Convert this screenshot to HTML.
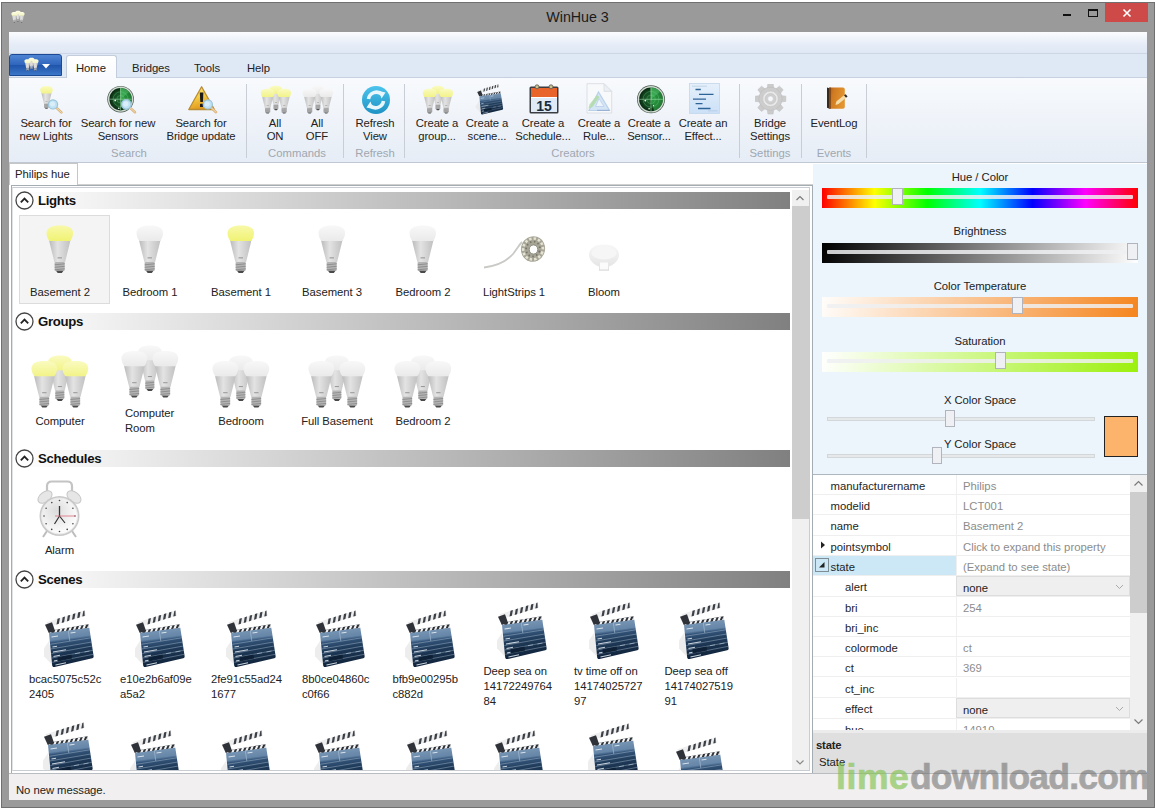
<!DOCTYPE html><html><head><meta charset="utf-8"><title>WinHue 3</title><style>
*{box-sizing:border-box;margin:0;padding:0}
html,body{width:1155px;height:808px;overflow:hidden;background:#fff}
body{font-family:"Liberation Sans",sans-serif;font-size:12px;color:#1e1e1e;position:relative}
.a{position:absolute}
.t{position:absolute;white-space:nowrap;font-size:11.300px;line-height:14px;letter-spacing:-0.050px;color:#222}
.c{text-align:center}
.rb{position:absolute;text-align:center;line-height:13px;font-size:11.300px;letter-spacing:-0.100px;color:#222;white-space:nowrap;width:100px}
.gl{position:absolute;top:146px;font-size:11.300px;line-height:14px;color:#a0a7b0;text-align:center;letter-spacing:0px;white-space:nowrap;transform:translateX(-50%)}
.sep{position:absolute;top:84px;width:1px;height:74px;background:#c9ced6}
.hdr{position:absolute;left:14px;width:776px;height:17px;background:linear-gradient(90deg,#ffffff 0%,#808080 100%)}
.hdr span{position:absolute;left:24px;top:-1px;font-weight:bold;font-size:13.200px;line-height:20px;color:#111;letter-spacing:-0.300px}
.hdr svg{position:absolute;left:1px;top:-1px}
.bar{position:absolute;left:822px;width:316px;height:20px}
.track{position:absolute;left:5px;right:5px;top:7px;height:4px;background:rgba(238,240,242,0.850);border-radius:1px}
.thumb{position:absolute;width:11px;height:17px;background:#eef0f4;border:1px solid #b2b4bd}
.pr{position:absolute;left:813px;width:317px;border-bottom:1px solid #efefef;font-size:11.300px;letter-spacing:0px;white-space:nowrap}
.pr .k{position:absolute;left:0;top:0;width:143px;height:100%;color:#1e1e1e}
.pr .k span{position:absolute;left:17.500px;top:4px;line-height:14px}
.pr.sub .k span{left:32px}
.pr .v{position:absolute;left:143px;top:0;width:174px;height:100%;color:#8c8c8c;border-left:1px solid #efefef}
.pr .v span{position:absolute;left:6px;top:4px;line-height:14px}
.pr .cb{background:#efefef;border:1px solid #dddddd;color:#1e1e1e}
</style></head><body>
<div class="a" style="left:1px;top:2px;width:1154px;height:806px;background:#9a9a9a;border:1px solid #707070"></div>
<div class="t" style="left:0px;top:9px;width:1155px;text-align:center;font-size:14.300px;line-height:17px;color:#1a1a1a;letter-spacing:-0.050px">WinHue 3</div>
<div class="a" style="left:11px;top:10px"><svg width="14" height="14" viewBox="-1 -3 60 60" style=""><g transform="translate(16.5,0) scale(0.9,0.96)">
<defs><linearGradient id="g1a" x1="0" x2="1" y1="0" y2="0"><stop offset="0" stop-color="#bababa"/><stop offset="0.400" stop-color="#e3e3e3"/><stop offset="1" stop-color="#c0c0c0"/></linearGradient>
<linearGradient id="g1b" x1="0" x2="0" y1="0" y2="1"><stop offset="0" stop-color="#fdfde6"/><stop offset="1" stop-color="#f3f4c0"/></linearGradient></defs>
<path d="M3 15 C4.500 22 7 31 8.500 37.500 L19 37.500 C20.500 31 23 22 24.500 15 Z" fill="url(#g1a)"/>
<path d="M14 0.500 C5.500 0.500 0.500 3 0.500 8 C0.500 11.500 2 14.500 3.500 16 L24 16 C25.500 14.500 27 11.500 27 8 C27 3 22.500 0.500 14 0.500 Z" fill="url(#g1b)"/>
<rect x="8.700" y="37" width="10" height="9" rx="1.200" fill="#b4b4b4"/>
<path d="M8.700 39.800 L18.700 38.800 M8.700 42.300 L18.700 41.300 M8.700 44.800 L18.700 43.800" stroke="#8a8a8a" stroke-width="0.900"/>
<path d="M10 45.800 L17.500 45.800 L15.800 48 L11.700 48 Z" fill="#4a4a4a"/>
<rect x="11.500" y="32.300" width="4.500" height="1.100" fill="#9a9a9a"/>
</g><g transform="translate(0,5.5) scale(0.97,0.98)">
<defs><linearGradient id="g2a" x1="0" x2="1" y1="0" y2="0"><stop offset="0" stop-color="#bababa"/><stop offset="0.400" stop-color="#e3e3e3"/><stop offset="1" stop-color="#c0c0c0"/></linearGradient>
<linearGradient id="g2b" x1="0" x2="0" y1="0" y2="1"><stop offset="0" stop-color="#fdfde6"/><stop offset="1" stop-color="#f3f4c0"/></linearGradient></defs>
<path d="M3 15 C4.500 22 7 31 8.500 37.500 L19 37.500 C20.500 31 23 22 24.500 15 Z" fill="url(#g2a)"/>
<path d="M14 0.500 C5.500 0.500 0.500 3 0.500 8 C0.500 11.500 2 14.500 3.500 16 L24 16 C25.500 14.500 27 11.500 27 8 C27 3 22.500 0.500 14 0.500 Z" fill="url(#g2b)"/>
<rect x="8.700" y="37" width="10" height="9" rx="1.200" fill="#b4b4b4"/>
<path d="M8.700 39.800 L18.700 38.800 M8.700 42.300 L18.700 41.300 M8.700 44.800 L18.700 43.800" stroke="#8a8a8a" stroke-width="0.900"/>
<path d="M10 45.800 L17.500 45.800 L15.800 48 L11.700 48 Z" fill="#4a4a4a"/>
<rect x="11.500" y="32.300" width="4.500" height="1.100" fill="#9a9a9a"/>
</g><g transform="translate(31,5.5) scale(0.97,0.98)">
<defs><linearGradient id="g3a" x1="0" x2="1" y1="0" y2="0"><stop offset="0" stop-color="#bababa"/><stop offset="0.400" stop-color="#e3e3e3"/><stop offset="1" stop-color="#c0c0c0"/></linearGradient>
<linearGradient id="g3b" x1="0" x2="0" y1="0" y2="1"><stop offset="0" stop-color="#fdfde6"/><stop offset="1" stop-color="#f3f4c0"/></linearGradient></defs>
<path d="M3 15 C4.500 22 7 31 8.500 37.500 L19 37.500 C20.500 31 23 22 24.500 15 Z" fill="url(#g3a)"/>
<path d="M14 0.500 C5.500 0.500 0.500 3 0.500 8 C0.500 11.500 2 14.500 3.500 16 L24 16 C25.500 14.500 27 11.500 27 8 C27 3 22.500 0.500 14 0.500 Z" fill="url(#g3b)"/>
<rect x="8.700" y="37" width="10" height="9" rx="1.200" fill="#b4b4b4"/>
<path d="M8.700 39.800 L18.700 38.800 M8.700 42.300 L18.700 41.300 M8.700 44.800 L18.700 43.800" stroke="#8a8a8a" stroke-width="0.900"/>
<path d="M10 45.800 L17.500 45.800 L15.800 48 L11.700 48 Z" fill="#4a4a4a"/>
<rect x="11.500" y="32.300" width="4.500" height="1.100" fill="#9a9a9a"/>
</g></svg></div>
<div class="a" style="left:1063px;top:14px;width:8px;height:2px;background:#111"></div>
<div class="a" style="left:1088px;top:9px;width:10px;height:8px;border:1px solid #111;border-top-width:2px"></div>
<div class="a" style="left:1105px;top:3px;width:43px;height:19px;background:#cd4a49"><svg width="43" height="19" style="position:absolute;left:0;top:0"><path d="M18.500 6.500 L25.500 13.500 M25.500 6.500 L18.500 13.500" stroke="#fff" stroke-width="1.600" fill="none"/></svg></div>
<div class="a" style="left:9px;top:32px;width:1138px;height:768px;background:#fff"></div>
<div class="a" style="left:9px;top:32px;width:1138px;height:22px;background:linear-gradient(#fbfcfe,#e6edf7 55%,#dee7f4)"></div>
<div class="a" style="left:9px;top:53px;width:1138px;height:25px;background:#dfe8f5;border-top:1px solid #ccd6e4;border-bottom:1px solid #c6d0de"></div>
<div class="a" style="left:9px;top:54px;width:53px;height:22px;border-radius:3px 3px 0 0;border:1px solid #1c4994;background:linear-gradient(#4f84d4 0%,#2f66bc 48%,#1f55aa 52%,#3b76c8 100%)"><svg width="15" height="15" viewBox="-1 -3 60 60" style="position:absolute;left:14px;top:2px"><g transform="translate(16.5,0) scale(0.9,0.96)">
<defs><linearGradient id="g4a" x1="0" x2="1" y1="0" y2="0"><stop offset="0" stop-color="#bababa"/><stop offset="0.400" stop-color="#e3e3e3"/><stop offset="1" stop-color="#c0c0c0"/></linearGradient>
<linearGradient id="g4b" x1="0" x2="0" y1="0" y2="1"><stop offset="0" stop-color="#fdfde6"/><stop offset="1" stop-color="#f3f4c0"/></linearGradient></defs>
<path d="M3 15 C4.500 22 7 31 8.500 37.500 L19 37.500 C20.500 31 23 22 24.500 15 Z" fill="url(#g4a)"/>
<path d="M14 0.500 C5.500 0.500 0.500 3 0.500 8 C0.500 11.500 2 14.500 3.500 16 L24 16 C25.500 14.500 27 11.500 27 8 C27 3 22.500 0.500 14 0.500 Z" fill="url(#g4b)"/>
<rect x="8.700" y="37" width="10" height="9" rx="1.200" fill="#b4b4b4"/>
<path d="M8.700 39.800 L18.700 38.800 M8.700 42.300 L18.700 41.300 M8.700 44.800 L18.700 43.800" stroke="#8a8a8a" stroke-width="0.900"/>
<path d="M10 45.800 L17.500 45.800 L15.800 48 L11.700 48 Z" fill="#4a4a4a"/>
<rect x="11.500" y="32.300" width="4.500" height="1.100" fill="#9a9a9a"/>
</g><g transform="translate(0,5.5) scale(0.97,0.98)">
<defs><linearGradient id="g5a" x1="0" x2="1" y1="0" y2="0"><stop offset="0" stop-color="#bababa"/><stop offset="0.400" stop-color="#e3e3e3"/><stop offset="1" stop-color="#c0c0c0"/></linearGradient>
<linearGradient id="g5b" x1="0" x2="0" y1="0" y2="1"><stop offset="0" stop-color="#fdfde6"/><stop offset="1" stop-color="#f3f4c0"/></linearGradient></defs>
<path d="M3 15 C4.500 22 7 31 8.500 37.500 L19 37.500 C20.500 31 23 22 24.500 15 Z" fill="url(#g5a)"/>
<path d="M14 0.500 C5.500 0.500 0.500 3 0.500 8 C0.500 11.500 2 14.500 3.500 16 L24 16 C25.500 14.500 27 11.500 27 8 C27 3 22.500 0.500 14 0.500 Z" fill="url(#g5b)"/>
<rect x="8.700" y="37" width="10" height="9" rx="1.200" fill="#b4b4b4"/>
<path d="M8.700 39.800 L18.700 38.800 M8.700 42.300 L18.700 41.300 M8.700 44.800 L18.700 43.800" stroke="#8a8a8a" stroke-width="0.900"/>
<path d="M10 45.800 L17.500 45.800 L15.800 48 L11.700 48 Z" fill="#4a4a4a"/>
<rect x="11.500" y="32.300" width="4.500" height="1.100" fill="#9a9a9a"/>
</g><g transform="translate(31,5.5) scale(0.97,0.98)">
<defs><linearGradient id="g6a" x1="0" x2="1" y1="0" y2="0"><stop offset="0" stop-color="#bababa"/><stop offset="0.400" stop-color="#e3e3e3"/><stop offset="1" stop-color="#c0c0c0"/></linearGradient>
<linearGradient id="g6b" x1="0" x2="0" y1="0" y2="1"><stop offset="0" stop-color="#fdfde6"/><stop offset="1" stop-color="#f3f4c0"/></linearGradient></defs>
<path d="M3 15 C4.500 22 7 31 8.500 37.500 L19 37.500 C20.500 31 23 22 24.500 15 Z" fill="url(#g6a)"/>
<path d="M14 0.500 C5.500 0.500 0.500 3 0.500 8 C0.500 11.500 2 14.500 3.500 16 L24 16 C25.500 14.500 27 11.500 27 8 C27 3 22.500 0.500 14 0.500 Z" fill="url(#g6b)"/>
<rect x="8.700" y="37" width="10" height="9" rx="1.200" fill="#b4b4b4"/>
<path d="M8.700 39.800 L18.700 38.800 M8.700 42.300 L18.700 41.300 M8.700 44.800 L18.700 43.800" stroke="#8a8a8a" stroke-width="0.900"/>
<path d="M10 45.800 L17.500 45.800 L15.800 48 L11.700 48 Z" fill="#4a4a4a"/>
<rect x="11.500" y="32.300" width="4.500" height="1.100" fill="#9a9a9a"/>
</g></svg><svg width="8" height="5" style="position:absolute;left:32px;top:9px"><path d="M0 0 L8 0 L4 4.500 Z" fill="#fff"/></svg></div>
<div class="a" style="left:66px;top:55px;width:51px;height:23px;background:linear-gradient(#ffffff,#f8fafd);border:1px solid #c3cddb;border-bottom:none;border-radius:3px 3px 0 0"></div>
<div class="t" style="left:76px;top:61px;">Home</div>
<div class="t" style="left:132px;top:61px;">Bridges</div>
<div class="t" style="left:194px;top:61px;">Tools</div>
<div class="t" style="left:247px;top:61px;">Help</div>
<div class="a" style="left:9px;top:78px;width:1138px;height:85px;background:linear-gradient(#f8fafd,#eff3f9 50%,#e6edf6);border-bottom:1px solid #c0c8d2"></div>
<div class="a" style="left:35px;top:84px"><svg width="32" height="32" viewBox="0 0 32 32" style="display:block;margin:0 auto 2px auto"><g transform="translate(5,1.7) scale(0.47,0.48)">
<defs><linearGradient id="g7a" x1="0" x2="1" y1="0" y2="0"><stop offset="0" stop-color="#bababa"/><stop offset="0.400" stop-color="#e3e3e3"/><stop offset="1" stop-color="#c0c0c0"/></linearGradient>
<linearGradient id="g7b" x1="0" x2="0" y1="0" y2="1"><stop offset="0" stop-color="#fafbc0"/><stop offset="1" stop-color="#f2f388"/></linearGradient></defs>
<path d="M3 15 C4.500 22 7 31 8.500 37.500 L19 37.500 C20.500 31 23 22 24.500 15 Z" fill="url(#g7a)"/>
<path d="M14 0.500 C5.500 0.500 0.500 3 0.500 8 C0.500 11.500 2 14.500 3.500 16 L24 16 C25.500 14.500 27 11.500 27 8 C27 3 22.500 0.500 14 0.500 Z" fill="url(#g7b)"/>
<rect x="8.700" y="37" width="10" height="9" rx="1.200" fill="#b4b4b4"/>
<path d="M8.700 39.800 L18.700 38.800 M8.700 42.300 L18.700 41.300 M8.700 44.800 L18.700 43.800" stroke="#8a8a8a" stroke-width="0.900"/>
<path d="M10 45.800 L17.500 45.800 L15.800 48 L11.700 48 Z" fill="#4a4a4a"/>
<rect x="11.500" y="32.300" width="4.500" height="1.100" fill="#9a9a9a"/>
</g><path d="M21.3 23.6 L26.4 28.4" stroke="#dcb47c" stroke-width="2.600" stroke-linecap="round"/><path d="M21.3 23.6 L26.4 28.4" stroke="#f0dcb8" stroke-width="1" stroke-linecap="round"/><circle cx="18" cy="20.4" r="4.6" fill="#bfe2f4" stroke="#9cc4d8" stroke-width="1.200"/><circle cx="17.5" cy="19.9" r="2.5" fill="#dcf0fa" opacity="0.900"/></svg></div>
<div class="rb" style="left:-4px;top:117px">Search for<br>new Lights</div>
<div class="a" style="left:107px;top:84px"><svg width="32" height="32" viewBox="0 0 32 32" style="display:block;margin:0 auto 2px auto"><defs><radialGradient id="g8" cx="0.500" cy="0.500" r="0.500"><stop offset="0" stop-color="#1f6a30"/><stop offset="0.700" stop-color="#12461f"/><stop offset="1" stop-color="#0a2611"/></radialGradient></defs>
<circle cx="13.6" cy="15.2" r="13.3" fill="#4a5a4e"/><circle cx="13.6" cy="15.2" r="12.6" fill="#d0dad2"/><circle cx="13.6" cy="15.2" r="11.2" fill="url(#g8)"/>
<path d="M13.6 15.2 L13.2 4.0 A11.2 11.2 0 0 1 16.5 26.0 Z" fill="#36c052" opacity="0.550"/>
<path d="M13.6 15.2 L13.2 4.0 A11.2 11.2 0 0 1 22.2 8.0 Z" fill="#7dff9a" opacity="0.250"/>
<circle cx="13.6" cy="15.2" r="7.4" fill="none" stroke="#6fdc88" stroke-width="0.500" opacity="0.600"/><circle cx="13.6" cy="15.2" r="3.8" fill="none" stroke="#6fdc88" stroke-width="0.500" opacity="0.600"/>
<path d="M13.6 4.0 L13.6 26.4 M2.4000000000000004 15.2 L24.799999999999997 15.2" stroke="#b8f5c4" stroke-width="0.700" opacity="0.700"/>
<circle cx="8.2" cy="16.4" r="0.900" fill="#e8ffe8"/><circle cx="16.0" cy="21.2" r="0.700" fill="#e8ffe8"/><circle cx="11.8" cy="24.2" r="0.800" fill="#e8ffe8"/><path d="M22.9 23.6 L28.0 28.2" stroke="#dcb47c" stroke-width="2.600" stroke-linecap="round"/><path d="M22.9 23.6 L28.0 28.2" stroke="#f0dcb8" stroke-width="1" stroke-linecap="round"/><circle cx="19.3" cy="20.4" r="4.8" fill="#bfe2f4" stroke="#9cc4d8" stroke-width="1.200"/><circle cx="18.8" cy="19.9" r="2.6" fill="#dcf0fa" opacity="0.900"/></svg></div>
<div class="rb" style="left:68px;top:117px">Search for new<br>Sensors</div>
<div class="a" style="left:188px;top:84px"><svg width="32" height="32" viewBox="0 0 32 32" style="display:block;margin:0 auto 2px auto"><defs><linearGradient id="g9" x1="0" x2="0.300" y1="0" y2="1"><stop offset="0" stop-color="#fbe680"/><stop offset="0.500" stop-color="#f6cf45"/><stop offset="1" stop-color="#e39a1c"/></linearGradient></defs>
<path d="M13.600 2.700 L0.800 25.500 L26.400 25.500 Z" fill="url(#g9)" stroke="#b98d34" stroke-width="1.300" stroke-linejoin="round"/>
<path d="M11.800 8.500 L15.400 8.500 L14.900 18 L12.300 18 Z" fill="#1c1c1c"/><rect x="12" y="19.800" width="3.200" height="3.200" rx="0.600" fill="#1c1c1c"/><path d="M23.1 23.6 L28.0 28.2" stroke="#dcb47c" stroke-width="2.600" stroke-linecap="round"/><path d="M23.1 23.6 L28.0 28.2" stroke="#f0dcb8" stroke-width="1" stroke-linecap="round"/><circle cx="19.8" cy="20.4" r="4.6" fill="#bfe2f4" stroke="#9cc4d8" stroke-width="1.200"/><circle cx="19.3" cy="19.9" r="2.5" fill="#dcf0fa" opacity="0.900"/></svg></div>
<div class="rb" style="left:151px;top:117px">Search for<br>Bridge update</div>
<div class="a" style="left:260px;top:84px"><svg width="32" height="32" viewBox="-1 -3 60 60" style="display:block"><g transform="translate(16.5,0) scale(0.9,0.96)">
<defs><linearGradient id="g10a" x1="0" x2="1" y1="0" y2="0"><stop offset="0" stop-color="#bababa"/><stop offset="0.400" stop-color="#e3e3e3"/><stop offset="1" stop-color="#c0c0c0"/></linearGradient>
<linearGradient id="g10b" x1="0" x2="0" y1="0" y2="1"><stop offset="0" stop-color="#fafbc0"/><stop offset="1" stop-color="#f2f388"/></linearGradient></defs>
<path d="M3 15 C4.500 22 7 31 8.500 37.500 L19 37.500 C20.500 31 23 22 24.500 15 Z" fill="url(#g10a)"/>
<path d="M14 0.500 C5.500 0.500 0.500 3 0.500 8 C0.500 11.500 2 14.500 3.500 16 L24 16 C25.500 14.500 27 11.500 27 8 C27 3 22.500 0.500 14 0.500 Z" fill="url(#g10b)"/>
<rect x="8.700" y="37" width="10" height="9" rx="1.200" fill="#b4b4b4"/>
<path d="M8.700 39.800 L18.700 38.800 M8.700 42.300 L18.700 41.300 M8.700 44.800 L18.700 43.800" stroke="#8a8a8a" stroke-width="0.900"/>
<path d="M10 45.800 L17.500 45.800 L15.800 48 L11.700 48 Z" fill="#4a4a4a"/>
<rect x="11.500" y="32.300" width="4.500" height="1.100" fill="#9a9a9a"/>
</g><g transform="translate(0,5.5) scale(0.97,0.98)">
<defs><linearGradient id="g11a" x1="0" x2="1" y1="0" y2="0"><stop offset="0" stop-color="#bababa"/><stop offset="0.400" stop-color="#e3e3e3"/><stop offset="1" stop-color="#c0c0c0"/></linearGradient>
<linearGradient id="g11b" x1="0" x2="0" y1="0" y2="1"><stop offset="0" stop-color="#fafbc0"/><stop offset="1" stop-color="#f2f388"/></linearGradient></defs>
<path d="M3 15 C4.500 22 7 31 8.500 37.500 L19 37.500 C20.500 31 23 22 24.500 15 Z" fill="url(#g11a)"/>
<path d="M14 0.500 C5.500 0.500 0.500 3 0.500 8 C0.500 11.500 2 14.500 3.500 16 L24 16 C25.500 14.500 27 11.500 27 8 C27 3 22.500 0.500 14 0.500 Z" fill="url(#g11b)"/>
<rect x="8.700" y="37" width="10" height="9" rx="1.200" fill="#b4b4b4"/>
<path d="M8.700 39.800 L18.700 38.800 M8.700 42.300 L18.700 41.300 M8.700 44.800 L18.700 43.800" stroke="#8a8a8a" stroke-width="0.900"/>
<path d="M10 45.800 L17.500 45.800 L15.800 48 L11.700 48 Z" fill="#4a4a4a"/>
<rect x="11.500" y="32.300" width="4.500" height="1.100" fill="#9a9a9a"/>
</g><g transform="translate(31,5.5) scale(0.97,0.98)">
<defs><linearGradient id="g12a" x1="0" x2="1" y1="0" y2="0"><stop offset="0" stop-color="#bababa"/><stop offset="0.400" stop-color="#e3e3e3"/><stop offset="1" stop-color="#c0c0c0"/></linearGradient>
<linearGradient id="g12b" x1="0" x2="0" y1="0" y2="1"><stop offset="0" stop-color="#fafbc0"/><stop offset="1" stop-color="#f2f388"/></linearGradient></defs>
<path d="M3 15 C4.500 22 7 31 8.500 37.500 L19 37.500 C20.500 31 23 22 24.500 15 Z" fill="url(#g12a)"/>
<path d="M14 0.500 C5.500 0.500 0.500 3 0.500 8 C0.500 11.500 2 14.500 3.500 16 L24 16 C25.500 14.500 27 11.500 27 8 C27 3 22.500 0.500 14 0.500 Z" fill="url(#g12b)"/>
<rect x="8.700" y="37" width="10" height="9" rx="1.200" fill="#b4b4b4"/>
<path d="M8.700 39.800 L18.700 38.800 M8.700 42.300 L18.700 41.300 M8.700 44.800 L18.700 43.800" stroke="#8a8a8a" stroke-width="0.900"/>
<path d="M10 45.800 L17.500 45.800 L15.800 48 L11.700 48 Z" fill="#4a4a4a"/>
<rect x="11.500" y="32.300" width="4.500" height="1.100" fill="#9a9a9a"/>
</g></svg></div>
<div class="rb" style="left:225px;top:117px">All<br>ON</div>
<div class="a" style="left:302px;top:84px"><svg width="32" height="32" viewBox="-1 -3 60 60" style="display:block"><g transform="translate(16.5,0) scale(0.9,0.96)">
<defs><linearGradient id="g13a" x1="0" x2="1" y1="0" y2="0"><stop offset="0" stop-color="#bababa"/><stop offset="0.400" stop-color="#e3e3e3"/><stop offset="1" stop-color="#c0c0c0"/></linearGradient>
<linearGradient id="g13b" x1="0" x2="0" y1="0" y2="1"><stop offset="0" stop-color="#f8f8f8"/><stop offset="1" stop-color="#eaeaea"/></linearGradient></defs>
<path d="M3 15 C4.500 22 7 31 8.500 37.500 L19 37.500 C20.500 31 23 22 24.500 15 Z" fill="url(#g13a)"/>
<path d="M14 0.500 C5.500 0.500 0.500 3 0.500 8 C0.500 11.500 2 14.500 3.500 16 L24 16 C25.500 14.500 27 11.500 27 8 C27 3 22.500 0.500 14 0.500 Z" fill="url(#g13b)"/>
<rect x="8.700" y="37" width="10" height="9" rx="1.200" fill="#b4b4b4"/>
<path d="M8.700 39.800 L18.700 38.800 M8.700 42.300 L18.700 41.300 M8.700 44.800 L18.700 43.800" stroke="#8a8a8a" stroke-width="0.900"/>
<path d="M10 45.800 L17.500 45.800 L15.800 48 L11.700 48 Z" fill="#4a4a4a"/>
<rect x="11.500" y="32.300" width="4.500" height="1.100" fill="#9a9a9a"/>
</g><g transform="translate(0,5.5) scale(0.97,0.98)">
<defs><linearGradient id="g14a" x1="0" x2="1" y1="0" y2="0"><stop offset="0" stop-color="#bababa"/><stop offset="0.400" stop-color="#e3e3e3"/><stop offset="1" stop-color="#c0c0c0"/></linearGradient>
<linearGradient id="g14b" x1="0" x2="0" y1="0" y2="1"><stop offset="0" stop-color="#f8f8f8"/><stop offset="1" stop-color="#eaeaea"/></linearGradient></defs>
<path d="M3 15 C4.500 22 7 31 8.500 37.500 L19 37.500 C20.500 31 23 22 24.500 15 Z" fill="url(#g14a)"/>
<path d="M14 0.500 C5.500 0.500 0.500 3 0.500 8 C0.500 11.500 2 14.500 3.500 16 L24 16 C25.500 14.500 27 11.500 27 8 C27 3 22.500 0.500 14 0.500 Z" fill="url(#g14b)"/>
<rect x="8.700" y="37" width="10" height="9" rx="1.200" fill="#b4b4b4"/>
<path d="M8.700 39.800 L18.700 38.800 M8.700 42.300 L18.700 41.300 M8.700 44.800 L18.700 43.800" stroke="#8a8a8a" stroke-width="0.900"/>
<path d="M10 45.800 L17.500 45.800 L15.800 48 L11.700 48 Z" fill="#4a4a4a"/>
<rect x="11.500" y="32.300" width="4.500" height="1.100" fill="#9a9a9a"/>
</g><g transform="translate(31,5.5) scale(0.97,0.98)">
<defs><linearGradient id="g15a" x1="0" x2="1" y1="0" y2="0"><stop offset="0" stop-color="#bababa"/><stop offset="0.400" stop-color="#e3e3e3"/><stop offset="1" stop-color="#c0c0c0"/></linearGradient>
<linearGradient id="g15b" x1="0" x2="0" y1="0" y2="1"><stop offset="0" stop-color="#f8f8f8"/><stop offset="1" stop-color="#eaeaea"/></linearGradient></defs>
<path d="M3 15 C4.500 22 7 31 8.500 37.500 L19 37.500 C20.500 31 23 22 24.500 15 Z" fill="url(#g15a)"/>
<path d="M14 0.500 C5.500 0.500 0.500 3 0.500 8 C0.500 11.500 2 14.500 3.500 16 L24 16 C25.500 14.500 27 11.500 27 8 C27 3 22.500 0.500 14 0.500 Z" fill="url(#g15b)"/>
<rect x="8.700" y="37" width="10" height="9" rx="1.200" fill="#b4b4b4"/>
<path d="M8.700 39.800 L18.700 38.800 M8.700 42.300 L18.700 41.300 M8.700 44.800 L18.700 43.800" stroke="#8a8a8a" stroke-width="0.900"/>
<path d="M10 45.800 L17.500 45.800 L15.800 48 L11.700 48 Z" fill="#4a4a4a"/>
<rect x="11.500" y="32.300" width="4.500" height="1.100" fill="#9a9a9a"/>
</g></svg></div>
<div class="rb" style="left:267px;top:117px">All<br>OFF</div>
<div class="a" style="left:360px;top:84px"><svg width="32" height="32" viewBox="0 0 32 32" style="display:block;margin:0 auto 2px auto"><defs><linearGradient id="g16" x1="0" x2="0" y1="0" y2="1"><stop offset="0" stop-color="#4cc4ec"/><stop offset="1" stop-color="#1f92c4"/></linearGradient></defs>
<circle cx="16" cy="16" r="14" fill="url(#g16)"/>
<path d="M8.500 15 A8 8 0 0 1 22 10.500" fill="none" stroke="#e9f7fd" stroke-width="3.600"/><path d="M19 7 L25.500 8.500 L21.500 14.500 Z" fill="#e9f7fd"/>
<path d="M23.500 17 A8 8 0 0 1 10 21.500" fill="none" stroke="#e9f7fd" stroke-width="3.600"/><path d="M13 25 L6.500 23.500 L10.500 17.500 Z" fill="#e9f7fd"/></svg></div>
<div class="rb" style="left:325px;top:117px">Refresh<br>View</div>
<div class="a" style="left:422px;top:84px"><svg width="32" height="32" viewBox="-1 -3 60 60" style="display:block"><g transform="translate(16.5,0) scale(0.9,0.96)">
<defs><linearGradient id="g17a" x1="0" x2="1" y1="0" y2="0"><stop offset="0" stop-color="#bababa"/><stop offset="0.400" stop-color="#e3e3e3"/><stop offset="1" stop-color="#c0c0c0"/></linearGradient>
<linearGradient id="g17b" x1="0" x2="0" y1="0" y2="1"><stop offset="0" stop-color="#fafbc0"/><stop offset="1" stop-color="#f2f388"/></linearGradient></defs>
<path d="M3 15 C4.500 22 7 31 8.500 37.500 L19 37.500 C20.500 31 23 22 24.500 15 Z" fill="url(#g17a)"/>
<path d="M14 0.500 C5.500 0.500 0.500 3 0.500 8 C0.500 11.500 2 14.500 3.500 16 L24 16 C25.500 14.500 27 11.500 27 8 C27 3 22.500 0.500 14 0.500 Z" fill="url(#g17b)"/>
<rect x="8.700" y="37" width="10" height="9" rx="1.200" fill="#b4b4b4"/>
<path d="M8.700 39.800 L18.700 38.800 M8.700 42.300 L18.700 41.300 M8.700 44.800 L18.700 43.800" stroke="#8a8a8a" stroke-width="0.900"/>
<path d="M10 45.800 L17.500 45.800 L15.800 48 L11.700 48 Z" fill="#4a4a4a"/>
<rect x="11.500" y="32.300" width="4.500" height="1.100" fill="#9a9a9a"/>
</g><g transform="translate(0,5.5) scale(0.97,0.98)">
<defs><linearGradient id="g18a" x1="0" x2="1" y1="0" y2="0"><stop offset="0" stop-color="#bababa"/><stop offset="0.400" stop-color="#e3e3e3"/><stop offset="1" stop-color="#c0c0c0"/></linearGradient>
<linearGradient id="g18b" x1="0" x2="0" y1="0" y2="1"><stop offset="0" stop-color="#fafbc0"/><stop offset="1" stop-color="#f2f388"/></linearGradient></defs>
<path d="M3 15 C4.500 22 7 31 8.500 37.500 L19 37.500 C20.500 31 23 22 24.500 15 Z" fill="url(#g18a)"/>
<path d="M14 0.500 C5.500 0.500 0.500 3 0.500 8 C0.500 11.500 2 14.500 3.500 16 L24 16 C25.500 14.500 27 11.500 27 8 C27 3 22.500 0.500 14 0.500 Z" fill="url(#g18b)"/>
<rect x="8.700" y="37" width="10" height="9" rx="1.200" fill="#b4b4b4"/>
<path d="M8.700 39.800 L18.700 38.800 M8.700 42.300 L18.700 41.300 M8.700 44.800 L18.700 43.800" stroke="#8a8a8a" stroke-width="0.900"/>
<path d="M10 45.800 L17.500 45.800 L15.800 48 L11.700 48 Z" fill="#4a4a4a"/>
<rect x="11.500" y="32.300" width="4.500" height="1.100" fill="#9a9a9a"/>
</g><g transform="translate(31,5.5) scale(0.97,0.98)">
<defs><linearGradient id="g19a" x1="0" x2="1" y1="0" y2="0"><stop offset="0" stop-color="#bababa"/><stop offset="0.400" stop-color="#e3e3e3"/><stop offset="1" stop-color="#c0c0c0"/></linearGradient>
<linearGradient id="g19b" x1="0" x2="0" y1="0" y2="1"><stop offset="0" stop-color="#fafbc0"/><stop offset="1" stop-color="#f2f388"/></linearGradient></defs>
<path d="M3 15 C4.500 22 7 31 8.500 37.500 L19 37.500 C20.500 31 23 22 24.500 15 Z" fill="url(#g19a)"/>
<path d="M14 0.500 C5.500 0.500 0.500 3 0.500 8 C0.500 11.500 2 14.500 3.500 16 L24 16 C25.500 14.500 27 11.500 27 8 C27 3 22.500 0.500 14 0.500 Z" fill="url(#g19b)"/>
<rect x="8.700" y="37" width="10" height="9" rx="1.200" fill="#b4b4b4"/>
<path d="M8.700 39.800 L18.700 38.800 M8.700 42.300 L18.700 41.300 M8.700 44.800 L18.700 43.800" stroke="#8a8a8a" stroke-width="0.900"/>
<path d="M10 45.800 L17.500 45.800 L15.800 48 L11.700 48 Z" fill="#4a4a4a"/>
<rect x="11.500" y="32.300" width="4.500" height="1.100" fill="#9a9a9a"/>
</g></svg></div>
<div class="rb" style="left:387px;top:117px">Create a<br>group...</div>
<div class="a" style="left:474px;top:84px"><svg width="32" height="32" viewBox="-5 0 60 60" style="display:block;margin:0 auto 2px auto"><defs><linearGradient id="g20" x1="0" x2="0.150" y1="0" y2="1"><stop offset="0" stop-color="#819dba"/><stop offset="0.320" stop-color="#6686a8"/><stop offset="0.380" stop-color="#34557a"/><stop offset="0.580" stop-color="#1f3b5a"/><stop offset="1" stop-color="#10233a"/></linearGradient></defs>
<path d="M-3 43 L5 31 L9 56 Z" fill="#e6e6e6" opacity="0.700"/>
<path d="M2.4 12.2 L40.5 0.5 L42.0 5.5 L3.9 17.2 Z" fill="#eeeeee"/><path d="M13.5 8.8 L15.9 8.1 L14.9 13.8 L12.5 14.5 Z" fill="#3b3f46"/><path d="M18.7 7.2 L21.0 6.5 L20.1 12.2 L17.7 12.9 Z" fill="#3b3f46"/><path d="M23.8 5.6 L26.2 4.9 L25.2 10.6 L22.9 11.4 Z" fill="#3b3f46"/><path d="M29.0 4.0 L31.4 3.3 L30.4 9.0 L28.0 9.8 Z" fill="#3b3f46"/><path d="M34.1 2.5 L36.5 1.7 L35.6 7.5 L33.2 8.2 Z" fill="#3b3f46"/><path d="M39.3 0.9 L40.5 0.5 L40.7 5.9 L38.3 6.6 Z" fill="#3b3f46"/>
<path d="M7.0 20.4 L44.5 14.2 L45.1 17.9 L7.6 24.1 Z" fill="#2c3037"/><path d="M11.4 19.7 L13.8 19.3 L12.2 23.4 L9.8 23.8 Z" fill="#f4f4f4"/><path d="M16.2 18.9 L18.5 18.5 L16.9 22.6 L14.5 23.0 Z" fill="#f4f4f4"/><path d="M20.9 18.1 L23.3 17.7 L21.6 21.8 L19.3 22.2 Z" fill="#f4f4f4"/><path d="M25.6 17.3 L28.0 16.9 L26.4 21.0 L24.0 21.4 Z" fill="#f4f4f4"/><path d="M30.4 16.5 L32.7 16.1 L31.1 20.3 L28.7 20.7 Z" fill="#f4f4f4"/><path d="M35.1 15.8 L37.5 15.4 L35.8 19.5 L33.5 19.9 Z" fill="#f4f4f4"/><path d="M39.8 15.0 L42.2 14.6 L40.6 18.7 L38.2 19.1 Z" fill="#f4f4f4"/><path d="M44.6 14.2 L44.5 14.2 L45.1 17.9 L42.9 18.3 Z" fill="#f4f4f4"/>
<path d="M1 14.800 L8 12.300 L11 20.800 L4.800 23 Z" fill="#2f3238"/>
<path d="M5 23 L45.300 17.800 L49.600 46 C49.800 47.200 49.300 48 48.200 48.300 L10.500 57 C9.300 57.300 8.400 56.800 8.200 55.600 Z" fill="url(#g20)"/>
<path d="M6.300 34.300 L47 27.800 M6.800 39 L47.700 32 M7.300 43.500 L48.300 36 M7.800 48 L48.900 40.300 M8.300 52.300 L49.400 44.300" stroke="#b5c8da" stroke-width="0.600" opacity="0.700"/>
<path d="M24.300 20.800 L25.800 31" stroke="#b5c8da" stroke-width="0.700" opacity="0.800"/>
<path d="M7.500 27 L14 26 M26.500 23 L31.500 22.200 M8.500 37 L13 36.200 M9 42 L22 39.700 M9.500 46.500 L16 45.300 M10 51 L13.500 50.300 M11.500 55 L22 52.700" stroke="#e8eff6" stroke-width="1.100" opacity="0.850"/>
<path d="M13.500 47.300 L27.500 44.600 L28 48.600 L14 51.400 Z" fill="#0d1f33" opacity="0.900"/>
<path d="M31 43.700 L36 42.800 M40.500 42 L45.500 41" stroke="#c9d8e6" stroke-width="0.800" opacity="0.700"/></svg></div>
<div class="rb" style="left:437px;top:117px">Create a<br>scene...</div>
<div class="a" style="left:528px;top:84px"><svg width="32" height="32" viewBox="0 0 32 32" style="display:block;margin:0 auto 2px auto"><rect x="1.500" y="2.500" width="29" height="27" rx="1.500" fill="#3a3d42"/>
<rect x="3" y="4" width="26" height="9" fill="#e8642a"/><rect x="3" y="13" width="26" height="15" fill="#dfeaf6"/>
<rect x="3" y="13" width="26" height="1" fill="#fff"/>
<circle cx="9" cy="2.800" r="2" fill="#c9c08a" stroke="#555" stroke-width="0.800"/><circle cx="23" cy="2.800" r="2" fill="#c9c08a" stroke="#555" stroke-width="0.800"/>
<text x="16" y="26.500" text-anchor="middle" font-family="Liberation Sans, sans-serif" font-weight="bold" font-size="14" fill="#1b2a3a">15</text></svg></div>
<div class="rb" style="left:493px;top:117px">Create a<br>Schedule...</div>
<div class="a" style="left:584px;top:83px"><svg width="32" height="32" viewBox="0 0 32 32" style="display:block;margin:0 auto 2px auto"><path d="M3 0.700 L20 0.700 L27.700 8.400 L27.700 30 L3 30 Z" fill="#f7f9fb" stroke="#d9dde2" stroke-width="0.900"/>
<path d="M20 0.700 L20 8.400 L27.700 8.400 Z" fill="#eceff3" stroke="#d9dde2" stroke-width="0.800"/>
<path d="M14.500 9 L5 27.500 L25.500 27.500 Z" fill="#d3e4f6" stroke="#b7cfea" stroke-width="1.200" opacity="0.950"/>
<path d="M15 15.500 L11.500 23.500 L20 23.500 Z" fill="#eef4fb" stroke="#b7cfea" stroke-width="0.800"/>
<path d="M4.500 25.500 L5.500 21.500 L13 12 L15.500 14 L8.500 24 Z" fill="#b4dcae" opacity="0.900"/>
<path d="M13 27.300 L25.500 27.300" stroke="#8fa6cf" stroke-width="0.900"/></svg></div>
<div class="rb" style="left:549px;top:117px">Create a<br>Rule...</div>
<div class="a" style="left:635px;top:84px"><svg width="32" height="32" viewBox="0 0 32 32" style="display:block;margin:0 auto 2px auto"><defs><radialGradient id="g21" cx="0.500" cy="0.500" r="0.500"><stop offset="0" stop-color="#1f6a30"/><stop offset="0.700" stop-color="#12461f"/><stop offset="1" stop-color="#0a2611"/></radialGradient></defs>
<circle cx="16" cy="15.3" r="14.0" fill="#4a5a4e"/><circle cx="16" cy="15.3" r="13.299999999999999" fill="#d0dad2"/><circle cx="16" cy="15.3" r="11.899999999999999" fill="url(#g21)"/>
<path d="M16 15.3 L15.6 3.4 A11.899999999999999 11.899999999999999 0 0 1 19.1 26.8 Z" fill="#36c052" opacity="0.550"/>
<path d="M16 15.3 L15.6 3.4 A11.899999999999999 11.899999999999999 0 0 1 25.1 7.7 Z" fill="#7dff9a" opacity="0.250"/>
<circle cx="16" cy="15.3" r="7.9" fill="none" stroke="#6fdc88" stroke-width="0.500" opacity="0.600"/><circle cx="16" cy="15.3" r="4.1" fill="none" stroke="#6fdc88" stroke-width="0.500" opacity="0.600"/>
<path d="M16 3.400000000000002 L16 27.2 M4.100000000000001 15.3 L27.9 15.3" stroke="#b8f5c4" stroke-width="0.700" opacity="0.700"/>
<circle cx="10.3" cy="16.6" r="0.900" fill="#e8ffe8"/><circle cx="18.5" cy="21.6" r="0.700" fill="#e8ffe8"/><circle cx="14.1" cy="24.8" r="0.800" fill="#e8ffe8"/></svg></div>
<div class="rb" style="left:599px;top:117px">Create a<br>Sensor...</div>
<div class="a" style="left:689px;top:83px"><svg width="32" height="32" viewBox="0 0 32 32" style="display:block;margin:0 auto 2px auto"><defs><linearGradient id="g22" x1="0" x2="0" y1="0" y2="1"><stop offset="0" stop-color="#e6f0fb"/><stop offset="1" stop-color="#cbe0f7"/></linearGradient></defs>
<rect x="0.500" y="0.500" width="30" height="30" fill="url(#g22)" stroke="#c2d6ec" stroke-width="0.800"/>
<path d="M3 3.200 L18 3.200 M19 27.800 L28.500 27.800" stroke="#a9c2dc" stroke-width="0.600"/>
<path d="M6.500 6.500 L11.800 6.500 M10 11.400 L24.500 11.400 M4 16.100 L17 16.100 M6.600 20.600 L13.500 20.600 M9 25.500 L21.500 25.500" stroke="#2e6396" stroke-width="1.300"/></svg></div>
<div class="rb" style="left:653px;top:117px">Create an<br>Effect...</div>
<div class="a" style="left:755px;top:83.5px"><svg width="32" height="32" viewBox="0 0 32 32" style="display:block;margin:0 auto 2px auto"><path d="M12.2 4.800000000000001 L12.9 -0.5 L18.1 -0.5 L18.8 4.800000000000001 Z" fill="#cbcbcb" stroke="#bdbdbd" stroke-width="0.500" transform="rotate(0 15.5 14.8)"/><path d="M12.2 4.800000000000001 L12.9 -0.5 L18.1 -0.5 L18.8 4.800000000000001 Z" fill="#cbcbcb" stroke="#bdbdbd" stroke-width="0.500" transform="rotate(45 15.5 14.8)"/><path d="M12.2 4.800000000000001 L12.9 -0.5 L18.1 -0.5 L18.8 4.800000000000001 Z" fill="#cbcbcb" stroke="#bdbdbd" stroke-width="0.500" transform="rotate(90 15.5 14.8)"/><path d="M12.2 4.800000000000001 L12.9 -0.5 L18.1 -0.5 L18.8 4.800000000000001 Z" fill="#cbcbcb" stroke="#bdbdbd" stroke-width="0.500" transform="rotate(135 15.5 14.8)"/><path d="M12.2 4.800000000000001 L12.9 -0.5 L18.1 -0.5 L18.8 4.800000000000001 Z" fill="#cbcbcb" stroke="#bdbdbd" stroke-width="0.500" transform="rotate(180 15.5 14.8)"/><path d="M12.2 4.800000000000001 L12.9 -0.5 L18.1 -0.5 L18.8 4.800000000000001 Z" fill="#cbcbcb" stroke="#bdbdbd" stroke-width="0.500" transform="rotate(225 15.5 14.8)"/><path d="M12.2 4.800000000000001 L12.9 -0.5 L18.1 -0.5 L18.8 4.800000000000001 Z" fill="#cbcbcb" stroke="#bdbdbd" stroke-width="0.500" transform="rotate(270 15.5 14.8)"/><path d="M12.2 4.800000000000001 L12.9 -0.5 L18.1 -0.5 L18.8 4.800000000000001 Z" fill="#cbcbcb" stroke="#bdbdbd" stroke-width="0.500" transform="rotate(315 15.5 14.8)"/><circle cx="15.5" cy="14.8" r="11.600" fill="#cdcdcd" stroke="#bcbcbc" stroke-width="0.600"/><circle cx="15.5" cy="14.8" r="7.800" fill="#e9e9e9" stroke="#c2c2c2" stroke-width="0.600"/><circle cx="15.5" cy="14.8" r="5.400" fill="#cfcfcf" stroke="#bdbdbd" stroke-width="0.500"/><circle cx="15.5" cy="14.8" r="2.800" fill="#f6f8fb" stroke="#c6c6c6" stroke-width="0.500"/></svg></div>
<div class="rb" style="left:720px;top:117px">Bridge<br>Settings</div>
<div class="a" style="left:819px;top:84px"><svg width="32" height="32" viewBox="0 0 32 32" style="display:block;margin:0 auto 2px auto"><defs><linearGradient id="g23" x1="0" x2="1" y1="0" y2="0.300"><stop offset="0" stop-color="#a85a18"/><stop offset="0.300" stop-color="#cf7a22"/><stop offset="1" stop-color="#e3942f"/></linearGradient></defs>
<path d="M8 3.500 L8 23.800 L11.200 25 L11.200 4.600 Z" fill="#3b2a1e"/>
<path d="M10.200 3.500 L23.800 3.500 C25 3.500 25.800 4.300 25.800 5.500 L25.800 22.800 C25.800 24 25 24.800 23.800 24.800 L10.200 24.800 Z" fill="url(#g23)"/>
<path d="M10.200 3.500 L12 3.500 L12 24.800 L10.200 24.800 Z" fill="#6e3c14" opacity="0.700"/>
<path d="M16.500 21 L17.300 17.500 L25 11.300 L27 13.800 L19.500 20 Z" fill="#f6dca8"/><path d="M25 11.300 L27 13.800 L28.600 12.600 L26.700 10.200 Z" fill="#2c2c2c"/></svg></div>
<div class="rb" style="left:784px;top:117px">EventLog</div>
<div class="sep" style="left:246px"></div>
<div class="sep" style="left:343px"></div>
<div class="sep" style="left:404px"></div>
<div class="sep" style="left:739px"></div>
<div class="sep" style="left:801px"></div>
<div class="sep" style="left:866px"></div>
<div class="gl" style="left:129px">Search</div>
<div class="gl" style="left:297px">Commands</div>
<div class="gl" style="left:375px">Refresh</div>
<div class="gl" style="left:573px">Creators</div>
<div class="gl" style="left:770px">Settings</div>
<div class="gl" style="left:834px">Events</div>
<div class="a" style="left:813px;top:164px;width:334px;height:610px;background:#ecf4fc"></div>
<div class="a" style="left:9px;top:163px;width:69px;height:22px;border:1px solid #c6c6c6;border-bottom:none;background:#fff"></div>
<div class="t" style="left:15px;top:167px;">Philips hue</div>
<div class="a" style="left:78px;top:184px;width:735px;height:1px;background:#d0d0d0"></div>
<div class="a" style="left:11px;top:185px;width:802px;height:589px;border:1px solid #a4acb4;background:#fff"></div>
<div class="a" style="left:12px;top:187px;width:798px;height:584px;border:1px solid #c9cdd2;border-left-color:#e0e3e6;background:#fff"></div>
<div class="a" style="left:0;top:0;width:1155px;height:770px;overflow:hidden">
<div class="hdr" style="top:192px"><svg width="19" height="19" viewBox="0 0 19 19"><circle cx="9.500" cy="9.500" r="8.500" fill="#fff" stroke="#444" stroke-width="1.300"/><path d="M5.800 11.300 L9.500 7.600 L13.200 11.300" fill="none" stroke="#222" stroke-width="1.800"/></svg><span>Lights</span></div>
<div class="hdr" style="top:313px"><svg width="19" height="19" viewBox="0 0 19 19"><circle cx="9.500" cy="9.500" r="8.500" fill="#fff" stroke="#444" stroke-width="1.300"/><path d="M5.800 11.300 L9.500 7.600 L13.200 11.300" fill="none" stroke="#222" stroke-width="1.800"/></svg><span>Groups</span></div>
<div class="hdr" style="top:450px"><svg width="19" height="19" viewBox="0 0 19 19"><circle cx="9.500" cy="9.500" r="8.500" fill="#fff" stroke="#444" stroke-width="1.300"/><path d="M5.800 11.300 L9.500 7.600 L13.200 11.300" fill="none" stroke="#222" stroke-width="1.800"/></svg><span>Schedules</span></div>
<div class="hdr" style="top:571px"><svg width="19" height="19" viewBox="0 0 19 19"><circle cx="9.500" cy="9.500" r="8.500" fill="#fff" stroke="#444" stroke-width="1.300"/><path d="M5.800 11.300 L9.500 7.600 L13.200 11.300" fill="none" stroke="#222" stroke-width="1.800"/></svg><span>Scenes</span></div>
<div class="a" style="left:19px;top:215px;width:91px;height:89px;background:#f4f4f4;border:1px solid #dcdcdc"></div>
<div class="a" style="left:46px;top:225px"><svg width="28" height="48" viewBox="0 0 28 48" style="display:block"><g transform="translate(0,0) scale(1.0,1.0)">
<defs><linearGradient id="g24a" x1="0" x2="1" y1="0" y2="0"><stop offset="0" stop-color="#bababa"/><stop offset="0.400" stop-color="#e3e3e3"/><stop offset="1" stop-color="#c0c0c0"/></linearGradient>
<linearGradient id="g24b" x1="0" x2="0" y1="0" y2="1"><stop offset="0" stop-color="#f8f9a8"/><stop offset="1" stop-color="#f0f274"/></linearGradient></defs>
<path d="M3 15 C4.500 22 7 31 8.500 37.500 L19 37.500 C20.500 31 23 22 24.500 15 Z" fill="url(#g24a)"/>
<path d="M14 0.500 C5.500 0.500 0.500 3 0.500 8 C0.500 11.500 2 14.500 3.500 16 L24 16 C25.500 14.500 27 11.500 27 8 C27 3 22.500 0.500 14 0.500 Z" fill="url(#g24b)"/>
<rect x="8.700" y="37" width="10" height="9" rx="1.200" fill="#b4b4b4"/>
<path d="M8.700 39.800 L18.700 38.800 M8.700 42.300 L18.700 41.300 M8.700 44.800 L18.700 43.800" stroke="#8a8a8a" stroke-width="0.900"/>
<path d="M10 45.800 L17.500 45.800 L15.800 48 L11.700 48 Z" fill="#4a4a4a"/>
<rect x="11.500" y="32.300" width="4.500" height="1.100" fill="#9a9a9a"/>
</g></svg></div>
<div class="t c" style="left:10.0px;top:285px;width:100px;">Basement 2</div>
<div class="a" style="left:136px;top:225px"><svg width="28" height="48" viewBox="0 0 28 48" style="display:block"><g transform="translate(0,0) scale(1.0,1.0)">
<defs><linearGradient id="g25a" x1="0" x2="1" y1="0" y2="0"><stop offset="0" stop-color="#bababa"/><stop offset="0.400" stop-color="#e3e3e3"/><stop offset="1" stop-color="#c0c0c0"/></linearGradient>
<linearGradient id="g25b" x1="0" x2="0" y1="0" y2="1"><stop offset="0" stop-color="#f8f8f8"/><stop offset="1" stop-color="#eaeaea"/></linearGradient></defs>
<path d="M3 15 C4.500 22 7 31 8.500 37.500 L19 37.500 C20.500 31 23 22 24.500 15 Z" fill="url(#g25a)"/>
<path d="M14 0.500 C5.500 0.500 0.500 3 0.500 8 C0.500 11.500 2 14.500 3.500 16 L24 16 C25.500 14.500 27 11.500 27 8 C27 3 22.500 0.500 14 0.500 Z" fill="url(#g25b)"/>
<rect x="8.700" y="37" width="10" height="9" rx="1.200" fill="#b4b4b4"/>
<path d="M8.700 39.800 L18.700 38.800 M8.700 42.300 L18.700 41.300 M8.700 44.800 L18.700 43.800" stroke="#8a8a8a" stroke-width="0.900"/>
<path d="M10 45.800 L17.500 45.800 L15.800 48 L11.700 48 Z" fill="#4a4a4a"/>
<rect x="11.500" y="32.300" width="4.500" height="1.100" fill="#9a9a9a"/>
</g></svg></div>
<div class="t c" style="left:100.0px;top:285px;width:100px;">Bedroom 1</div>
<div class="a" style="left:227px;top:225px"><svg width="28" height="48" viewBox="0 0 28 48" style="display:block"><g transform="translate(0,0) scale(1.0,1.0)">
<defs><linearGradient id="g26a" x1="0" x2="1" y1="0" y2="0"><stop offset="0" stop-color="#bababa"/><stop offset="0.400" stop-color="#e3e3e3"/><stop offset="1" stop-color="#c0c0c0"/></linearGradient>
<linearGradient id="g26b" x1="0" x2="0" y1="0" y2="1"><stop offset="0" stop-color="#f8f9a8"/><stop offset="1" stop-color="#f0f274"/></linearGradient></defs>
<path d="M3 15 C4.500 22 7 31 8.500 37.500 L19 37.500 C20.500 31 23 22 24.500 15 Z" fill="url(#g26a)"/>
<path d="M14 0.500 C5.500 0.500 0.500 3 0.500 8 C0.500 11.500 2 14.500 3.500 16 L24 16 C25.500 14.500 27 11.500 27 8 C27 3 22.500 0.500 14 0.500 Z" fill="url(#g26b)"/>
<rect x="8.700" y="37" width="10" height="9" rx="1.200" fill="#b4b4b4"/>
<path d="M8.700 39.800 L18.700 38.800 M8.700 42.300 L18.700 41.300 M8.700 44.800 L18.700 43.800" stroke="#8a8a8a" stroke-width="0.900"/>
<path d="M10 45.800 L17.500 45.800 L15.800 48 L11.700 48 Z" fill="#4a4a4a"/>
<rect x="11.500" y="32.300" width="4.500" height="1.100" fill="#9a9a9a"/>
</g></svg></div>
<div class="t c" style="left:191.0px;top:285px;width:100px;">Basement 1</div>
<div class="a" style="left:318px;top:225px"><svg width="28" height="48" viewBox="0 0 28 48" style="display:block"><g transform="translate(0,0) scale(1.0,1.0)">
<defs><linearGradient id="g27a" x1="0" x2="1" y1="0" y2="0"><stop offset="0" stop-color="#bababa"/><stop offset="0.400" stop-color="#e3e3e3"/><stop offset="1" stop-color="#c0c0c0"/></linearGradient>
<linearGradient id="g27b" x1="0" x2="0" y1="0" y2="1"><stop offset="0" stop-color="#f8f8f8"/><stop offset="1" stop-color="#eaeaea"/></linearGradient></defs>
<path d="M3 15 C4.500 22 7 31 8.500 37.500 L19 37.500 C20.500 31 23 22 24.500 15 Z" fill="url(#g27a)"/>
<path d="M14 0.500 C5.500 0.500 0.500 3 0.500 8 C0.500 11.500 2 14.500 3.500 16 L24 16 C25.500 14.500 27 11.500 27 8 C27 3 22.500 0.500 14 0.500 Z" fill="url(#g27b)"/>
<rect x="8.700" y="37" width="10" height="9" rx="1.200" fill="#b4b4b4"/>
<path d="M8.700 39.800 L18.700 38.800 M8.700 42.300 L18.700 41.300 M8.700 44.800 L18.700 43.800" stroke="#8a8a8a" stroke-width="0.900"/>
<path d="M10 45.800 L17.500 45.800 L15.800 48 L11.700 48 Z" fill="#4a4a4a"/>
<rect x="11.500" y="32.300" width="4.500" height="1.100" fill="#9a9a9a"/>
</g></svg></div>
<div class="t c" style="left:282.0px;top:285px;width:100px;">Basement 3</div>
<div class="a" style="left:409px;top:225px"><svg width="28" height="48" viewBox="0 0 28 48" style="display:block"><g transform="translate(0,0) scale(1.0,1.0)">
<defs><linearGradient id="g28a" x1="0" x2="1" y1="0" y2="0"><stop offset="0" stop-color="#bababa"/><stop offset="0.400" stop-color="#e3e3e3"/><stop offset="1" stop-color="#c0c0c0"/></linearGradient>
<linearGradient id="g28b" x1="0" x2="0" y1="0" y2="1"><stop offset="0" stop-color="#f8f8f8"/><stop offset="1" stop-color="#eaeaea"/></linearGradient></defs>
<path d="M3 15 C4.500 22 7 31 8.500 37.500 L19 37.500 C20.500 31 23 22 24.500 15 Z" fill="url(#g28a)"/>
<path d="M14 0.500 C5.500 0.500 0.500 3 0.500 8 C0.500 11.500 2 14.500 3.500 16 L24 16 C25.500 14.500 27 11.500 27 8 C27 3 22.500 0.500 14 0.500 Z" fill="url(#g28b)"/>
<rect x="8.700" y="37" width="10" height="9" rx="1.200" fill="#b4b4b4"/>
<path d="M8.700 39.800 L18.700 38.800 M8.700 42.300 L18.700 41.300 M8.700 44.800 L18.700 43.800" stroke="#8a8a8a" stroke-width="0.900"/>
<path d="M10 45.800 L17.500 45.800 L15.800 48 L11.700 48 Z" fill="#4a4a4a"/>
<rect x="11.500" y="32.300" width="4.500" height="1.100" fill="#9a9a9a"/>
</g></svg></div>
<div class="t c" style="left:373.0px;top:285px;width:100px;">Bedroom 2</div>
<div class="a" style="left:484px;top:232px"><svg width="64" height="42" viewBox="0 0 64 42" style="display:block">
<path d="M0 35.500 C12 34 22 30 29 22 C33 17 35 13 38 10" fill="none" stroke="#c9c9c6" stroke-width="1.800"/>
<ellipse cx="49" cy="17" rx="12" ry="12.800" transform="rotate(18 49 17)" fill="#a7a596"/>
<ellipse cx="49" cy="17" rx="9.800" ry="10.600" transform="rotate(18 49 17)" fill="none" stroke="#e4e2d2" stroke-width="2.600" stroke-dasharray="2.500 2"/>
<ellipse cx="49" cy="17" rx="6.800" ry="7.500" transform="rotate(18 49 17)" fill="none" stroke="#77756a" stroke-width="1.800" stroke-dasharray="1.500 2.500"/>
<ellipse cx="49.500" cy="17.500" rx="4.300" ry="4.600" fill="#fdfdfd" stroke="#8d8b80" stroke-width="1"/>
</svg></div>
<div class="t c" style="left:464.0px;top:285px;width:100px;">LightStrips 1</div>
<div class="a" style="left:587px;top:243px"><svg width="34" height="30" viewBox="0 0 34 30" style="display:block">
<defs><linearGradient id="g29" x1="0" x2="0" y1="0" y2="1"><stop offset="0" stop-color="#f7f7f7"/><stop offset="1" stop-color="#e3e3e3"/></linearGradient></defs>
<path d="M2 12 C2 4.500 9 1.500 17 1.500 C25 1.500 32 4.500 32 12 C32 17 27 22 22 23.500 L22 27 L12 27 L12 23.500 C7 22 2 17 2 12 Z" fill="url(#g29)"/>
<ellipse cx="17" cy="10" rx="12.500" ry="6.500" fill="#f6f6f6"/>
<rect x="13" y="19.500" width="8" height="7.500" fill="#fbfbfb"/>
<rect x="12" y="26.500" width="10" height="1.200" fill="#dadada"/>
</svg></div>
<div class="t c" style="left:554.0px;top:285px;width:100px;">Bloom</div>
<div class="a" style="left:31px;top:355px"><svg width="60" height="54" viewBox="0 0 60 54" style="display:block"><g transform="translate(16.5,0) scale(0.9,0.96)">
<defs><linearGradient id="g30a" x1="0" x2="1" y1="0" y2="0"><stop offset="0" stop-color="#bababa"/><stop offset="0.400" stop-color="#e3e3e3"/><stop offset="1" stop-color="#c0c0c0"/></linearGradient>
<linearGradient id="g30b" x1="0" x2="0" y1="0" y2="1"><stop offset="0" stop-color="#fafbc0"/><stop offset="1" stop-color="#f2f388"/></linearGradient></defs>
<path d="M3 15 C4.500 22 7 31 8.500 37.500 L19 37.500 C20.500 31 23 22 24.500 15 Z" fill="url(#g30a)"/>
<path d="M14 0.500 C5.500 0.500 0.500 3 0.500 8 C0.500 11.500 2 14.500 3.500 16 L24 16 C25.500 14.500 27 11.500 27 8 C27 3 22.500 0.500 14 0.500 Z" fill="url(#g30b)"/>
<rect x="8.700" y="37" width="10" height="9" rx="1.200" fill="#b4b4b4"/>
<path d="M8.700 39.800 L18.700 38.800 M8.700 42.300 L18.700 41.300 M8.700 44.800 L18.700 43.800" stroke="#8a8a8a" stroke-width="0.900"/>
<path d="M10 45.800 L17.500 45.800 L15.800 48 L11.700 48 Z" fill="#4a4a4a"/>
<rect x="11.500" y="32.300" width="4.500" height="1.100" fill="#9a9a9a"/>
</g><g transform="translate(0,5.5) scale(0.97,0.98)">
<defs><linearGradient id="g31a" x1="0" x2="1" y1="0" y2="0"><stop offset="0" stop-color="#bababa"/><stop offset="0.400" stop-color="#e3e3e3"/><stop offset="1" stop-color="#c0c0c0"/></linearGradient>
<linearGradient id="g31b" x1="0" x2="0" y1="0" y2="1"><stop offset="0" stop-color="#fafbc0"/><stop offset="1" stop-color="#f2f388"/></linearGradient></defs>
<path d="M3 15 C4.500 22 7 31 8.500 37.500 L19 37.500 C20.500 31 23 22 24.500 15 Z" fill="url(#g31a)"/>
<path d="M14 0.500 C5.500 0.500 0.500 3 0.500 8 C0.500 11.500 2 14.500 3.500 16 L24 16 C25.500 14.500 27 11.500 27 8 C27 3 22.500 0.500 14 0.500 Z" fill="url(#g31b)"/>
<rect x="8.700" y="37" width="10" height="9" rx="1.200" fill="#b4b4b4"/>
<path d="M8.700 39.800 L18.700 38.800 M8.700 42.300 L18.700 41.300 M8.700 44.800 L18.700 43.800" stroke="#8a8a8a" stroke-width="0.900"/>
<path d="M10 45.800 L17.500 45.800 L15.800 48 L11.700 48 Z" fill="#4a4a4a"/>
<rect x="11.500" y="32.300" width="4.500" height="1.100" fill="#9a9a9a"/>
</g><g transform="translate(31,5.5) scale(0.97,0.98)">
<defs><linearGradient id="g32a" x1="0" x2="1" y1="0" y2="0"><stop offset="0" stop-color="#bababa"/><stop offset="0.400" stop-color="#e3e3e3"/><stop offset="1" stop-color="#c0c0c0"/></linearGradient>
<linearGradient id="g32b" x1="0" x2="0" y1="0" y2="1"><stop offset="0" stop-color="#fafbc0"/><stop offset="1" stop-color="#f2f388"/></linearGradient></defs>
<path d="M3 15 C4.500 22 7 31 8.500 37.500 L19 37.500 C20.500 31 23 22 24.500 15 Z" fill="url(#g32a)"/>
<path d="M14 0.500 C5.500 0.500 0.500 3 0.500 8 C0.500 11.500 2 14.500 3.500 16 L24 16 C25.500 14.500 27 11.500 27 8 C27 3 22.500 0.500 14 0.500 Z" fill="url(#g32b)"/>
<rect x="8.700" y="37" width="10" height="9" rx="1.200" fill="#b4b4b4"/>
<path d="M8.700 39.800 L18.700 38.800 M8.700 42.300 L18.700 41.300 M8.700 44.800 L18.700 43.800" stroke="#8a8a8a" stroke-width="0.900"/>
<path d="M10 45.800 L17.500 45.800 L15.800 48 L11.700 48 Z" fill="#4a4a4a"/>
<rect x="11.500" y="32.300" width="4.500" height="1.100" fill="#9a9a9a"/>
</g></svg></div>
<div class="t c" style="left:10.0px;top:414px;width:100px;">Computer</div>
<div class="a" style="left:121px;top:345px"><svg width="60" height="54" viewBox="0 0 60 54" style="display:block"><g transform="translate(16.5,0) scale(0.9,0.96)">
<defs><linearGradient id="g33a" x1="0" x2="1" y1="0" y2="0"><stop offset="0" stop-color="#bababa"/><stop offset="0.400" stop-color="#e3e3e3"/><stop offset="1" stop-color="#c0c0c0"/></linearGradient>
<linearGradient id="g33b" x1="0" x2="0" y1="0" y2="1"><stop offset="0" stop-color="#f8f8f8"/><stop offset="1" stop-color="#eaeaea"/></linearGradient></defs>
<path d="M3 15 C4.500 22 7 31 8.500 37.500 L19 37.500 C20.500 31 23 22 24.500 15 Z" fill="url(#g33a)"/>
<path d="M14 0.500 C5.500 0.500 0.500 3 0.500 8 C0.500 11.500 2 14.500 3.500 16 L24 16 C25.500 14.500 27 11.500 27 8 C27 3 22.500 0.500 14 0.500 Z" fill="url(#g33b)"/>
<rect x="8.700" y="37" width="10" height="9" rx="1.200" fill="#b4b4b4"/>
<path d="M8.700 39.800 L18.700 38.800 M8.700 42.300 L18.700 41.300 M8.700 44.800 L18.700 43.800" stroke="#8a8a8a" stroke-width="0.900"/>
<path d="M10 45.800 L17.500 45.800 L15.800 48 L11.700 48 Z" fill="#4a4a4a"/>
<rect x="11.500" y="32.300" width="4.500" height="1.100" fill="#9a9a9a"/>
</g><g transform="translate(0,5.5) scale(0.97,0.98)">
<defs><linearGradient id="g34a" x1="0" x2="1" y1="0" y2="0"><stop offset="0" stop-color="#bababa"/><stop offset="0.400" stop-color="#e3e3e3"/><stop offset="1" stop-color="#c0c0c0"/></linearGradient>
<linearGradient id="g34b" x1="0" x2="0" y1="0" y2="1"><stop offset="0" stop-color="#f8f8f8"/><stop offset="1" stop-color="#eaeaea"/></linearGradient></defs>
<path d="M3 15 C4.500 22 7 31 8.500 37.500 L19 37.500 C20.500 31 23 22 24.500 15 Z" fill="url(#g34a)"/>
<path d="M14 0.500 C5.500 0.500 0.500 3 0.500 8 C0.500 11.500 2 14.500 3.500 16 L24 16 C25.500 14.500 27 11.500 27 8 C27 3 22.500 0.500 14 0.500 Z" fill="url(#g34b)"/>
<rect x="8.700" y="37" width="10" height="9" rx="1.200" fill="#b4b4b4"/>
<path d="M8.700 39.800 L18.700 38.800 M8.700 42.300 L18.700 41.300 M8.700 44.800 L18.700 43.800" stroke="#8a8a8a" stroke-width="0.900"/>
<path d="M10 45.800 L17.500 45.800 L15.800 48 L11.700 48 Z" fill="#4a4a4a"/>
<rect x="11.500" y="32.300" width="4.500" height="1.100" fill="#9a9a9a"/>
</g><g transform="translate(31,5.5) scale(0.97,0.98)">
<defs><linearGradient id="g35a" x1="0" x2="1" y1="0" y2="0"><stop offset="0" stop-color="#bababa"/><stop offset="0.400" stop-color="#e3e3e3"/><stop offset="1" stop-color="#c0c0c0"/></linearGradient>
<linearGradient id="g35b" x1="0" x2="0" y1="0" y2="1"><stop offset="0" stop-color="#f8f8f8"/><stop offset="1" stop-color="#eaeaea"/></linearGradient></defs>
<path d="M3 15 C4.500 22 7 31 8.500 37.500 L19 37.500 C20.500 31 23 22 24.500 15 Z" fill="url(#g35a)"/>
<path d="M14 0.500 C5.500 0.500 0.500 3 0.500 8 C0.500 11.500 2 14.500 3.500 16 L24 16 C25.500 14.500 27 11.500 27 8 C27 3 22.500 0.500 14 0.500 Z" fill="url(#g35b)"/>
<rect x="8.700" y="37" width="10" height="9" rx="1.200" fill="#b4b4b4"/>
<path d="M8.700 39.800 L18.700 38.800 M8.700 42.300 L18.700 41.300 M8.700 44.800 L18.700 43.800" stroke="#8a8a8a" stroke-width="0.900"/>
<path d="M10 45.800 L17.500 45.800 L15.800 48 L11.700 48 Z" fill="#4a4a4a"/>
<rect x="11.500" y="32.300" width="4.500" height="1.100" fill="#9a9a9a"/>
</g></svg></div>
<div class="t" style="left:125px;top:406px;line-height:15px">Computer<br>Room</div>
<div class="a" style="left:212px;top:355px"><svg width="60" height="54" viewBox="0 0 60 54" style="display:block"><g transform="translate(16.5,0) scale(0.9,0.96)">
<defs><linearGradient id="g36a" x1="0" x2="1" y1="0" y2="0"><stop offset="0" stop-color="#bababa"/><stop offset="0.400" stop-color="#e3e3e3"/><stop offset="1" stop-color="#c0c0c0"/></linearGradient>
<linearGradient id="g36b" x1="0" x2="0" y1="0" y2="1"><stop offset="0" stop-color="#f8f8f8"/><stop offset="1" stop-color="#eaeaea"/></linearGradient></defs>
<path d="M3 15 C4.500 22 7 31 8.500 37.500 L19 37.500 C20.500 31 23 22 24.500 15 Z" fill="url(#g36a)"/>
<path d="M14 0.500 C5.500 0.500 0.500 3 0.500 8 C0.500 11.500 2 14.500 3.500 16 L24 16 C25.500 14.500 27 11.500 27 8 C27 3 22.500 0.500 14 0.500 Z" fill="url(#g36b)"/>
<rect x="8.700" y="37" width="10" height="9" rx="1.200" fill="#b4b4b4"/>
<path d="M8.700 39.800 L18.700 38.800 M8.700 42.300 L18.700 41.300 M8.700 44.800 L18.700 43.800" stroke="#8a8a8a" stroke-width="0.900"/>
<path d="M10 45.800 L17.500 45.800 L15.800 48 L11.700 48 Z" fill="#4a4a4a"/>
<rect x="11.500" y="32.300" width="4.500" height="1.100" fill="#9a9a9a"/>
</g><g transform="translate(0,5.5) scale(0.97,0.98)">
<defs><linearGradient id="g37a" x1="0" x2="1" y1="0" y2="0"><stop offset="0" stop-color="#bababa"/><stop offset="0.400" stop-color="#e3e3e3"/><stop offset="1" stop-color="#c0c0c0"/></linearGradient>
<linearGradient id="g37b" x1="0" x2="0" y1="0" y2="1"><stop offset="0" stop-color="#f8f8f8"/><stop offset="1" stop-color="#eaeaea"/></linearGradient></defs>
<path d="M3 15 C4.500 22 7 31 8.500 37.500 L19 37.500 C20.500 31 23 22 24.500 15 Z" fill="url(#g37a)"/>
<path d="M14 0.500 C5.500 0.500 0.500 3 0.500 8 C0.500 11.500 2 14.500 3.500 16 L24 16 C25.500 14.500 27 11.500 27 8 C27 3 22.500 0.500 14 0.500 Z" fill="url(#g37b)"/>
<rect x="8.700" y="37" width="10" height="9" rx="1.200" fill="#b4b4b4"/>
<path d="M8.700 39.800 L18.700 38.800 M8.700 42.300 L18.700 41.300 M8.700 44.800 L18.700 43.800" stroke="#8a8a8a" stroke-width="0.900"/>
<path d="M10 45.800 L17.500 45.800 L15.800 48 L11.700 48 Z" fill="#4a4a4a"/>
<rect x="11.500" y="32.300" width="4.500" height="1.100" fill="#9a9a9a"/>
</g><g transform="translate(31,5.5) scale(0.97,0.98)">
<defs><linearGradient id="g38a" x1="0" x2="1" y1="0" y2="0"><stop offset="0" stop-color="#bababa"/><stop offset="0.400" stop-color="#e3e3e3"/><stop offset="1" stop-color="#c0c0c0"/></linearGradient>
<linearGradient id="g38b" x1="0" x2="0" y1="0" y2="1"><stop offset="0" stop-color="#f8f8f8"/><stop offset="1" stop-color="#eaeaea"/></linearGradient></defs>
<path d="M3 15 C4.500 22 7 31 8.500 37.500 L19 37.500 C20.500 31 23 22 24.500 15 Z" fill="url(#g38a)"/>
<path d="M14 0.500 C5.500 0.500 0.500 3 0.500 8 C0.500 11.500 2 14.500 3.500 16 L24 16 C25.500 14.500 27 11.500 27 8 C27 3 22.500 0.500 14 0.500 Z" fill="url(#g38b)"/>
<rect x="8.700" y="37" width="10" height="9" rx="1.200" fill="#b4b4b4"/>
<path d="M8.700 39.800 L18.700 38.800 M8.700 42.300 L18.700 41.300 M8.700 44.800 L18.700 43.800" stroke="#8a8a8a" stroke-width="0.900"/>
<path d="M10 45.800 L17.500 45.800 L15.800 48 L11.700 48 Z" fill="#4a4a4a"/>
<rect x="11.500" y="32.300" width="4.500" height="1.100" fill="#9a9a9a"/>
</g></svg></div>
<div class="t c" style="left:191.0px;top:414px;width:100px;">Bedroom</div>
<div class="a" style="left:308px;top:355px"><svg width="60" height="54" viewBox="0 0 60 54" style="display:block"><g transform="translate(16.5,0) scale(0.9,0.96)">
<defs><linearGradient id="g39a" x1="0" x2="1" y1="0" y2="0"><stop offset="0" stop-color="#bababa"/><stop offset="0.400" stop-color="#e3e3e3"/><stop offset="1" stop-color="#c0c0c0"/></linearGradient>
<linearGradient id="g39b" x1="0" x2="0" y1="0" y2="1"><stop offset="0" stop-color="#f8f8f8"/><stop offset="1" stop-color="#eaeaea"/></linearGradient></defs>
<path d="M3 15 C4.500 22 7 31 8.500 37.500 L19 37.500 C20.500 31 23 22 24.500 15 Z" fill="url(#g39a)"/>
<path d="M14 0.500 C5.500 0.500 0.500 3 0.500 8 C0.500 11.500 2 14.500 3.500 16 L24 16 C25.500 14.500 27 11.500 27 8 C27 3 22.500 0.500 14 0.500 Z" fill="url(#g39b)"/>
<rect x="8.700" y="37" width="10" height="9" rx="1.200" fill="#b4b4b4"/>
<path d="M8.700 39.800 L18.700 38.800 M8.700 42.300 L18.700 41.300 M8.700 44.800 L18.700 43.800" stroke="#8a8a8a" stroke-width="0.900"/>
<path d="M10 45.800 L17.500 45.800 L15.800 48 L11.700 48 Z" fill="#4a4a4a"/>
<rect x="11.500" y="32.300" width="4.500" height="1.100" fill="#9a9a9a"/>
</g><g transform="translate(0,5.5) scale(0.97,0.98)">
<defs><linearGradient id="g40a" x1="0" x2="1" y1="0" y2="0"><stop offset="0" stop-color="#bababa"/><stop offset="0.400" stop-color="#e3e3e3"/><stop offset="1" stop-color="#c0c0c0"/></linearGradient>
<linearGradient id="g40b" x1="0" x2="0" y1="0" y2="1"><stop offset="0" stop-color="#f8f8f8"/><stop offset="1" stop-color="#eaeaea"/></linearGradient></defs>
<path d="M3 15 C4.500 22 7 31 8.500 37.500 L19 37.500 C20.500 31 23 22 24.500 15 Z" fill="url(#g40a)"/>
<path d="M14 0.500 C5.500 0.500 0.500 3 0.500 8 C0.500 11.500 2 14.500 3.500 16 L24 16 C25.500 14.500 27 11.500 27 8 C27 3 22.500 0.500 14 0.500 Z" fill="url(#g40b)"/>
<rect x="8.700" y="37" width="10" height="9" rx="1.200" fill="#b4b4b4"/>
<path d="M8.700 39.800 L18.700 38.800 M8.700 42.300 L18.700 41.300 M8.700 44.800 L18.700 43.800" stroke="#8a8a8a" stroke-width="0.900"/>
<path d="M10 45.800 L17.500 45.800 L15.800 48 L11.700 48 Z" fill="#4a4a4a"/>
<rect x="11.500" y="32.300" width="4.500" height="1.100" fill="#9a9a9a"/>
</g><g transform="translate(31,5.5) scale(0.97,0.98)">
<defs><linearGradient id="g41a" x1="0" x2="1" y1="0" y2="0"><stop offset="0" stop-color="#bababa"/><stop offset="0.400" stop-color="#e3e3e3"/><stop offset="1" stop-color="#c0c0c0"/></linearGradient>
<linearGradient id="g41b" x1="0" x2="0" y1="0" y2="1"><stop offset="0" stop-color="#f8f8f8"/><stop offset="1" stop-color="#eaeaea"/></linearGradient></defs>
<path d="M3 15 C4.500 22 7 31 8.500 37.500 L19 37.500 C20.500 31 23 22 24.500 15 Z" fill="url(#g41a)"/>
<path d="M14 0.500 C5.500 0.500 0.500 3 0.500 8 C0.500 11.500 2 14.500 3.500 16 L24 16 C25.500 14.500 27 11.500 27 8 C27 3 22.500 0.500 14 0.500 Z" fill="url(#g41b)"/>
<rect x="8.700" y="37" width="10" height="9" rx="1.200" fill="#b4b4b4"/>
<path d="M8.700 39.800 L18.700 38.800 M8.700 42.300 L18.700 41.300 M8.700 44.800 L18.700 43.800" stroke="#8a8a8a" stroke-width="0.900"/>
<path d="M10 45.800 L17.500 45.800 L15.800 48 L11.700 48 Z" fill="#4a4a4a"/>
<rect x="11.500" y="32.300" width="4.500" height="1.100" fill="#9a9a9a"/>
</g></svg></div>
<div class="t c" style="left:287.0px;top:414px;width:100px;">Full Basement</div>
<div class="a" style="left:394px;top:355px"><svg width="60" height="54" viewBox="0 0 60 54" style="display:block"><g transform="translate(16.5,0) scale(0.9,0.96)">
<defs><linearGradient id="g42a" x1="0" x2="1" y1="0" y2="0"><stop offset="0" stop-color="#bababa"/><stop offset="0.400" stop-color="#e3e3e3"/><stop offset="1" stop-color="#c0c0c0"/></linearGradient>
<linearGradient id="g42b" x1="0" x2="0" y1="0" y2="1"><stop offset="0" stop-color="#f8f8f8"/><stop offset="1" stop-color="#eaeaea"/></linearGradient></defs>
<path d="M3 15 C4.500 22 7 31 8.500 37.500 L19 37.500 C20.500 31 23 22 24.500 15 Z" fill="url(#g42a)"/>
<path d="M14 0.500 C5.500 0.500 0.500 3 0.500 8 C0.500 11.500 2 14.500 3.500 16 L24 16 C25.500 14.500 27 11.500 27 8 C27 3 22.500 0.500 14 0.500 Z" fill="url(#g42b)"/>
<rect x="8.700" y="37" width="10" height="9" rx="1.200" fill="#b4b4b4"/>
<path d="M8.700 39.800 L18.700 38.800 M8.700 42.300 L18.700 41.300 M8.700 44.800 L18.700 43.800" stroke="#8a8a8a" stroke-width="0.900"/>
<path d="M10 45.800 L17.500 45.800 L15.800 48 L11.700 48 Z" fill="#4a4a4a"/>
<rect x="11.500" y="32.300" width="4.500" height="1.100" fill="#9a9a9a"/>
</g><g transform="translate(0,5.5) scale(0.97,0.98)">
<defs><linearGradient id="g43a" x1="0" x2="1" y1="0" y2="0"><stop offset="0" stop-color="#bababa"/><stop offset="0.400" stop-color="#e3e3e3"/><stop offset="1" stop-color="#c0c0c0"/></linearGradient>
<linearGradient id="g43b" x1="0" x2="0" y1="0" y2="1"><stop offset="0" stop-color="#f8f8f8"/><stop offset="1" stop-color="#eaeaea"/></linearGradient></defs>
<path d="M3 15 C4.500 22 7 31 8.500 37.500 L19 37.500 C20.500 31 23 22 24.500 15 Z" fill="url(#g43a)"/>
<path d="M14 0.500 C5.500 0.500 0.500 3 0.500 8 C0.500 11.500 2 14.500 3.500 16 L24 16 C25.500 14.500 27 11.500 27 8 C27 3 22.500 0.500 14 0.500 Z" fill="url(#g43b)"/>
<rect x="8.700" y="37" width="10" height="9" rx="1.200" fill="#b4b4b4"/>
<path d="M8.700 39.800 L18.700 38.800 M8.700 42.300 L18.700 41.300 M8.700 44.800 L18.700 43.800" stroke="#8a8a8a" stroke-width="0.900"/>
<path d="M10 45.800 L17.500 45.800 L15.800 48 L11.700 48 Z" fill="#4a4a4a"/>
<rect x="11.500" y="32.300" width="4.500" height="1.100" fill="#9a9a9a"/>
</g><g transform="translate(31,5.5) scale(0.97,0.98)">
<defs><linearGradient id="g44a" x1="0" x2="1" y1="0" y2="0"><stop offset="0" stop-color="#bababa"/><stop offset="0.400" stop-color="#e3e3e3"/><stop offset="1" stop-color="#c0c0c0"/></linearGradient>
<linearGradient id="g44b" x1="0" x2="0" y1="0" y2="1"><stop offset="0" stop-color="#f8f8f8"/><stop offset="1" stop-color="#eaeaea"/></linearGradient></defs>
<path d="M3 15 C4.500 22 7 31 8.500 37.500 L19 37.500 C20.500 31 23 22 24.500 15 Z" fill="url(#g44a)"/>
<path d="M14 0.500 C5.500 0.500 0.500 3 0.500 8 C0.500 11.500 2 14.500 3.500 16 L24 16 C25.500 14.500 27 11.500 27 8 C27 3 22.500 0.500 14 0.500 Z" fill="url(#g44b)"/>
<rect x="8.700" y="37" width="10" height="9" rx="1.200" fill="#b4b4b4"/>
<path d="M8.700 39.800 L18.700 38.800 M8.700 42.300 L18.700 41.300 M8.700 44.800 L18.700 43.800" stroke="#8a8a8a" stroke-width="0.900"/>
<path d="M10 45.800 L17.500 45.800 L15.800 48 L11.700 48 Z" fill="#4a4a4a"/>
<rect x="11.500" y="32.300" width="4.500" height="1.100" fill="#9a9a9a"/>
</g></svg></div>
<div class="t c" style="left:373.0px;top:414px;width:100px;">Bedroom 2</div>
<div class="a" style="left:37px;top:480px"><svg width="46" height="58" viewBox="0 0 46 58" style="display:block">
<defs><radialGradient id="g45" cx="0.4" cy="0.35" r="0.7"><stop offset="0" stop-color="#dcdcdc"/><stop offset="0.6" stop-color="#f2f2f2"/><stop offset="1" stop-color="#ffffff"/></radialGradient></defs>
<path d="M10 14 L10 6 C10 3 12 1.500 15 1.500 L30 1.500 C33 1.500 35 3 35 6 L35 14" fill="none" stroke="#c4c4c4" stroke-width="2.2"/>
<ellipse cx="8" cy="17" rx="8" ry="5" transform="rotate(-38 8 17)" fill="#e6e6e6" stroke="#c6c6c6"/>
<ellipse cx="37" cy="17" rx="8" ry="5" transform="rotate(38 37 17)" fill="#e6e6e6" stroke="#c6c6c6"/>
<path d="M10 51 L6 57 M35 51 L39 57" stroke="#bdbdbd" stroke-width="2"/>
<circle cx="22.5" cy="36" r="20" fill="#c9c9c9"/>
<circle cx="22.500" cy="36" r="18" fill="url(#g45)" stroke="#e9e9e9" stroke-width="1"/>
<circle cx="22.5" cy="51.5" r="0.8" fill="#444"/><circle cx="30.2" cy="49.4" r="0.8" fill="#444"/><circle cx="35.9" cy="43.8" r="0.8" fill="#444"/><circle cx="38.0" cy="36.0" r="0.8" fill="#444"/><circle cx="35.9" cy="28.3" r="0.8" fill="#444"/><circle cx="30.2" cy="22.6" r="0.8" fill="#444"/><circle cx="22.5" cy="20.5" r="0.8" fill="#444"/><circle cx="14.8" cy="22.6" r="0.8" fill="#444"/><circle cx="9.1" cy="28.2" r="0.8" fill="#444"/><circle cx="7.0" cy="36.0" r="0.8" fill="#444"/><circle cx="9.1" cy="43.8" r="0.8" fill="#444"/><circle cx="14.7" cy="49.4" r="0.8" fill="#444"/>
<path d="M22.500 36 L22.5 26" stroke="#333" stroke-width="1.3"/><path d="M22.500 36 L17.500 44 M22.500 36 L28 43" stroke="#333" stroke-width="1.2"/>
<path d="M18 36 L38 36" stroke="#d86a7a" stroke-width="0.8"/>
</svg></div>
<div class="t c" style="left:9.5px;top:543px;width:100px;">Alarm</div>
<div class="a" style="left:44px;top:609.5px"><svg width="50" height="60" viewBox="0 0 50 60" style="display:block"><defs><linearGradient id="g46" x1="0" x2="0.150" y1="0" y2="1"><stop offset="0" stop-color="#819dba"/><stop offset="0.320" stop-color="#6686a8"/><stop offset="0.380" stop-color="#34557a"/><stop offset="0.580" stop-color="#1f3b5a"/><stop offset="1" stop-color="#10233a"/></linearGradient></defs>
<path d="M-3 43 L5 31 L9 56 Z" fill="#e6e6e6" opacity="0.700"/>
<path d="M2.4 12.2 L40.5 0.5 L42.0 5.5 L3.9 17.2 Z" fill="#eeeeee"/><path d="M13.5 8.8 L15.9 8.1 L14.9 13.8 L12.5 14.5 Z" fill="#3b3f46"/><path d="M18.7 7.2 L21.0 6.5 L20.1 12.2 L17.7 12.9 Z" fill="#3b3f46"/><path d="M23.8 5.6 L26.2 4.9 L25.2 10.6 L22.9 11.4 Z" fill="#3b3f46"/><path d="M29.0 4.0 L31.4 3.3 L30.4 9.0 L28.0 9.8 Z" fill="#3b3f46"/><path d="M34.1 2.5 L36.5 1.7 L35.6 7.5 L33.2 8.2 Z" fill="#3b3f46"/><path d="M39.3 0.9 L40.5 0.5 L40.7 5.9 L38.3 6.6 Z" fill="#3b3f46"/>
<path d="M7.0 20.4 L44.5 14.2 L45.1 17.9 L7.6 24.1 Z" fill="#2c3037"/><path d="M11.4 19.7 L13.8 19.3 L12.2 23.4 L9.8 23.8 Z" fill="#f4f4f4"/><path d="M16.2 18.9 L18.5 18.5 L16.9 22.6 L14.5 23.0 Z" fill="#f4f4f4"/><path d="M20.9 18.1 L23.3 17.7 L21.6 21.8 L19.3 22.2 Z" fill="#f4f4f4"/><path d="M25.6 17.3 L28.0 16.9 L26.4 21.0 L24.0 21.4 Z" fill="#f4f4f4"/><path d="M30.4 16.5 L32.7 16.1 L31.1 20.3 L28.7 20.7 Z" fill="#f4f4f4"/><path d="M35.1 15.8 L37.5 15.4 L35.8 19.5 L33.5 19.9 Z" fill="#f4f4f4"/><path d="M39.8 15.0 L42.2 14.6 L40.6 18.7 L38.2 19.1 Z" fill="#f4f4f4"/><path d="M44.6 14.2 L44.5 14.2 L45.1 17.9 L42.9 18.3 Z" fill="#f4f4f4"/>
<path d="M1 14.800 L8 12.300 L11 20.800 L4.800 23 Z" fill="#2f3238"/>
<path d="M5 23 L45.300 17.800 L49.600 46 C49.800 47.200 49.300 48 48.200 48.300 L10.500 57 C9.300 57.300 8.400 56.800 8.200 55.600 Z" fill="url(#g46)"/>
<path d="M6.300 34.300 L47 27.800 M6.800 39 L47.700 32 M7.300 43.500 L48.300 36 M7.800 48 L48.900 40.300 M8.300 52.300 L49.400 44.300" stroke="#b5c8da" stroke-width="0.600" opacity="0.700"/>
<path d="M24.300 20.800 L25.800 31" stroke="#b5c8da" stroke-width="0.700" opacity="0.800"/>
<path d="M7.500 27 L14 26 M26.500 23 L31.500 22.200 M8.500 37 L13 36.200 M9 42 L22 39.700 M9.500 46.500 L16 45.300 M10 51 L13.500 50.300 M11.500 55 L22 52.700" stroke="#e8eff6" stroke-width="1.100" opacity="0.850"/>
<path d="M13.500 47.300 L27.500 44.600 L28 48.600 L14 51.400 Z" fill="#0d1f33" opacity="0.900"/>
<path d="M31 43.700 L36 42.800 M40.500 42 L45.500 41" stroke="#c9d8e6" stroke-width="0.800" opacity="0.700"/></svg></div>
<div class="t" style="left:29px;top:672px;line-height:15px">bcac5075c52c<br>2405</div>
<div class="a" style="left:134.5px;top:609.5px"><svg width="50" height="60" viewBox="0 0 50 60" style="display:block"><defs><linearGradient id="g47" x1="0" x2="0.150" y1="0" y2="1"><stop offset="0" stop-color="#819dba"/><stop offset="0.320" stop-color="#6686a8"/><stop offset="0.380" stop-color="#34557a"/><stop offset="0.580" stop-color="#1f3b5a"/><stop offset="1" stop-color="#10233a"/></linearGradient></defs>
<path d="M-3 43 L5 31 L9 56 Z" fill="#e6e6e6" opacity="0.700"/>
<path d="M2.4 12.2 L40.5 0.5 L42.0 5.5 L3.9 17.2 Z" fill="#eeeeee"/><path d="M13.5 8.8 L15.9 8.1 L14.9 13.8 L12.5 14.5 Z" fill="#3b3f46"/><path d="M18.7 7.2 L21.0 6.5 L20.1 12.2 L17.7 12.9 Z" fill="#3b3f46"/><path d="M23.8 5.6 L26.2 4.9 L25.2 10.6 L22.9 11.4 Z" fill="#3b3f46"/><path d="M29.0 4.0 L31.4 3.3 L30.4 9.0 L28.0 9.8 Z" fill="#3b3f46"/><path d="M34.1 2.5 L36.5 1.7 L35.6 7.5 L33.2 8.2 Z" fill="#3b3f46"/><path d="M39.3 0.9 L40.5 0.5 L40.7 5.9 L38.3 6.6 Z" fill="#3b3f46"/>
<path d="M7.0 20.4 L44.5 14.2 L45.1 17.9 L7.6 24.1 Z" fill="#2c3037"/><path d="M11.4 19.7 L13.8 19.3 L12.2 23.4 L9.8 23.8 Z" fill="#f4f4f4"/><path d="M16.2 18.9 L18.5 18.5 L16.9 22.6 L14.5 23.0 Z" fill="#f4f4f4"/><path d="M20.9 18.1 L23.3 17.7 L21.6 21.8 L19.3 22.2 Z" fill="#f4f4f4"/><path d="M25.6 17.3 L28.0 16.9 L26.4 21.0 L24.0 21.4 Z" fill="#f4f4f4"/><path d="M30.4 16.5 L32.7 16.1 L31.1 20.3 L28.7 20.7 Z" fill="#f4f4f4"/><path d="M35.1 15.8 L37.5 15.4 L35.8 19.5 L33.5 19.9 Z" fill="#f4f4f4"/><path d="M39.8 15.0 L42.2 14.6 L40.6 18.7 L38.2 19.1 Z" fill="#f4f4f4"/><path d="M44.6 14.2 L44.5 14.2 L45.1 17.9 L42.9 18.3 Z" fill="#f4f4f4"/>
<path d="M1 14.800 L8 12.300 L11 20.800 L4.800 23 Z" fill="#2f3238"/>
<path d="M5 23 L45.300 17.800 L49.600 46 C49.800 47.200 49.300 48 48.200 48.300 L10.500 57 C9.300 57.300 8.400 56.800 8.200 55.600 Z" fill="url(#g47)"/>
<path d="M6.300 34.300 L47 27.800 M6.800 39 L47.700 32 M7.300 43.500 L48.300 36 M7.800 48 L48.900 40.300 M8.300 52.300 L49.400 44.300" stroke="#b5c8da" stroke-width="0.600" opacity="0.700"/>
<path d="M24.300 20.800 L25.800 31" stroke="#b5c8da" stroke-width="0.700" opacity="0.800"/>
<path d="M7.500 27 L14 26 M26.500 23 L31.500 22.200 M8.500 37 L13 36.200 M9 42 L22 39.700 M9.500 46.500 L16 45.300 M10 51 L13.500 50.300 M11.500 55 L22 52.700" stroke="#e8eff6" stroke-width="1.100" opacity="0.850"/>
<path d="M13.500 47.300 L27.500 44.600 L28 48.600 L14 51.400 Z" fill="#0d1f33" opacity="0.900"/>
<path d="M31 43.700 L36 42.800 M40.500 42 L45.500 41" stroke="#c9d8e6" stroke-width="0.800" opacity="0.700"/></svg></div>
<div class="t" style="left:120px;top:672px;line-height:15px">e10e2b6af09e<br>a5a2</div>
<div class="a" style="left:225.5px;top:609.5px"><svg width="50" height="60" viewBox="0 0 50 60" style="display:block"><defs><linearGradient id="g48" x1="0" x2="0.150" y1="0" y2="1"><stop offset="0" stop-color="#819dba"/><stop offset="0.320" stop-color="#6686a8"/><stop offset="0.380" stop-color="#34557a"/><stop offset="0.580" stop-color="#1f3b5a"/><stop offset="1" stop-color="#10233a"/></linearGradient></defs>
<path d="M-3 43 L5 31 L9 56 Z" fill="#e6e6e6" opacity="0.700"/>
<path d="M2.4 12.2 L40.5 0.5 L42.0 5.5 L3.9 17.2 Z" fill="#eeeeee"/><path d="M13.5 8.8 L15.9 8.1 L14.9 13.8 L12.5 14.5 Z" fill="#3b3f46"/><path d="M18.7 7.2 L21.0 6.5 L20.1 12.2 L17.7 12.9 Z" fill="#3b3f46"/><path d="M23.8 5.6 L26.2 4.9 L25.2 10.6 L22.9 11.4 Z" fill="#3b3f46"/><path d="M29.0 4.0 L31.4 3.3 L30.4 9.0 L28.0 9.8 Z" fill="#3b3f46"/><path d="M34.1 2.5 L36.5 1.7 L35.6 7.5 L33.2 8.2 Z" fill="#3b3f46"/><path d="M39.3 0.9 L40.5 0.5 L40.7 5.9 L38.3 6.6 Z" fill="#3b3f46"/>
<path d="M7.0 20.4 L44.5 14.2 L45.1 17.9 L7.6 24.1 Z" fill="#2c3037"/><path d="M11.4 19.7 L13.8 19.3 L12.2 23.4 L9.8 23.8 Z" fill="#f4f4f4"/><path d="M16.2 18.9 L18.5 18.5 L16.9 22.6 L14.5 23.0 Z" fill="#f4f4f4"/><path d="M20.9 18.1 L23.3 17.7 L21.6 21.8 L19.3 22.2 Z" fill="#f4f4f4"/><path d="M25.6 17.3 L28.0 16.9 L26.4 21.0 L24.0 21.4 Z" fill="#f4f4f4"/><path d="M30.4 16.5 L32.7 16.1 L31.1 20.3 L28.7 20.7 Z" fill="#f4f4f4"/><path d="M35.1 15.8 L37.5 15.4 L35.8 19.5 L33.5 19.9 Z" fill="#f4f4f4"/><path d="M39.8 15.0 L42.2 14.6 L40.6 18.7 L38.2 19.1 Z" fill="#f4f4f4"/><path d="M44.6 14.2 L44.5 14.2 L45.1 17.9 L42.9 18.3 Z" fill="#f4f4f4"/>
<path d="M1 14.800 L8 12.300 L11 20.800 L4.800 23 Z" fill="#2f3238"/>
<path d="M5 23 L45.300 17.800 L49.600 46 C49.800 47.200 49.300 48 48.200 48.300 L10.500 57 C9.300 57.300 8.400 56.800 8.200 55.600 Z" fill="url(#g48)"/>
<path d="M6.300 34.300 L47 27.800 M6.800 39 L47.700 32 M7.300 43.500 L48.300 36 M7.800 48 L48.900 40.300 M8.300 52.300 L49.400 44.300" stroke="#b5c8da" stroke-width="0.600" opacity="0.700"/>
<path d="M24.300 20.800 L25.800 31" stroke="#b5c8da" stroke-width="0.700" opacity="0.800"/>
<path d="M7.500 27 L14 26 M26.500 23 L31.500 22.200 M8.500 37 L13 36.200 M9 42 L22 39.700 M9.500 46.500 L16 45.300 M10 51 L13.500 50.300 M11.500 55 L22 52.700" stroke="#e8eff6" stroke-width="1.100" opacity="0.850"/>
<path d="M13.500 47.300 L27.500 44.600 L28 48.600 L14 51.400 Z" fill="#0d1f33" opacity="0.900"/>
<path d="M31 43.700 L36 42.800 M40.500 42 L45.500 41" stroke="#c9d8e6" stroke-width="0.800" opacity="0.700"/></svg></div>
<div class="t" style="left:211px;top:672px;line-height:15px">2fe91c55ad24<br>1677</div>
<div class="a" style="left:315px;top:609.5px"><svg width="50" height="60" viewBox="0 0 50 60" style="display:block"><defs><linearGradient id="g49" x1="0" x2="0.150" y1="0" y2="1"><stop offset="0" stop-color="#819dba"/><stop offset="0.320" stop-color="#6686a8"/><stop offset="0.380" stop-color="#34557a"/><stop offset="0.580" stop-color="#1f3b5a"/><stop offset="1" stop-color="#10233a"/></linearGradient></defs>
<path d="M-3 43 L5 31 L9 56 Z" fill="#e6e6e6" opacity="0.700"/>
<path d="M2.4 12.2 L40.5 0.5 L42.0 5.5 L3.9 17.2 Z" fill="#eeeeee"/><path d="M13.5 8.8 L15.9 8.1 L14.9 13.8 L12.5 14.5 Z" fill="#3b3f46"/><path d="M18.7 7.2 L21.0 6.5 L20.1 12.2 L17.7 12.9 Z" fill="#3b3f46"/><path d="M23.8 5.6 L26.2 4.9 L25.2 10.6 L22.9 11.4 Z" fill="#3b3f46"/><path d="M29.0 4.0 L31.4 3.3 L30.4 9.0 L28.0 9.8 Z" fill="#3b3f46"/><path d="M34.1 2.5 L36.5 1.7 L35.6 7.5 L33.2 8.2 Z" fill="#3b3f46"/><path d="M39.3 0.9 L40.5 0.5 L40.7 5.9 L38.3 6.6 Z" fill="#3b3f46"/>
<path d="M7.0 20.4 L44.5 14.2 L45.1 17.9 L7.6 24.1 Z" fill="#2c3037"/><path d="M11.4 19.7 L13.8 19.3 L12.2 23.4 L9.8 23.8 Z" fill="#f4f4f4"/><path d="M16.2 18.9 L18.5 18.5 L16.9 22.6 L14.5 23.0 Z" fill="#f4f4f4"/><path d="M20.9 18.1 L23.3 17.7 L21.6 21.8 L19.3 22.2 Z" fill="#f4f4f4"/><path d="M25.6 17.3 L28.0 16.9 L26.4 21.0 L24.0 21.4 Z" fill="#f4f4f4"/><path d="M30.4 16.5 L32.7 16.1 L31.1 20.3 L28.7 20.7 Z" fill="#f4f4f4"/><path d="M35.1 15.8 L37.5 15.4 L35.8 19.5 L33.5 19.9 Z" fill="#f4f4f4"/><path d="M39.8 15.0 L42.2 14.6 L40.6 18.7 L38.2 19.1 Z" fill="#f4f4f4"/><path d="M44.6 14.2 L44.5 14.2 L45.1 17.9 L42.9 18.3 Z" fill="#f4f4f4"/>
<path d="M1 14.800 L8 12.300 L11 20.800 L4.800 23 Z" fill="#2f3238"/>
<path d="M5 23 L45.300 17.800 L49.600 46 C49.800 47.200 49.300 48 48.200 48.300 L10.500 57 C9.300 57.300 8.400 56.800 8.200 55.600 Z" fill="url(#g49)"/>
<path d="M6.300 34.300 L47 27.800 M6.800 39 L47.700 32 M7.300 43.500 L48.300 36 M7.800 48 L48.900 40.300 M8.300 52.300 L49.400 44.300" stroke="#b5c8da" stroke-width="0.600" opacity="0.700"/>
<path d="M24.300 20.800 L25.800 31" stroke="#b5c8da" stroke-width="0.700" opacity="0.800"/>
<path d="M7.500 27 L14 26 M26.500 23 L31.500 22.200 M8.500 37 L13 36.200 M9 42 L22 39.700 M9.500 46.500 L16 45.300 M10 51 L13.500 50.300 M11.500 55 L22 52.700" stroke="#e8eff6" stroke-width="1.100" opacity="0.850"/>
<path d="M13.500 47.300 L27.500 44.600 L28 48.600 L14 51.400 Z" fill="#0d1f33" opacity="0.900"/>
<path d="M31 43.700 L36 42.800 M40.500 42 L45.500 41" stroke="#c9d8e6" stroke-width="0.800" opacity="0.700"/></svg></div>
<div class="t" style="left:302px;top:672px;line-height:15px">8b0ce04860c<br>c0f66</div>
<div class="a" style="left:404.5px;top:610px"><svg width="50" height="60" viewBox="0 0 50 60" style="display:block"><defs><linearGradient id="g50" x1="0" x2="0.150" y1="0" y2="1"><stop offset="0" stop-color="#819dba"/><stop offset="0.320" stop-color="#6686a8"/><stop offset="0.380" stop-color="#34557a"/><stop offset="0.580" stop-color="#1f3b5a"/><stop offset="1" stop-color="#10233a"/></linearGradient></defs>
<path d="M-3 43 L5 31 L9 56 Z" fill="#e6e6e6" opacity="0.700"/>
<path d="M2.4 12.2 L40.5 0.5 L42.0 5.5 L3.9 17.2 Z" fill="#eeeeee"/><path d="M13.5 8.8 L15.9 8.1 L14.9 13.8 L12.5 14.5 Z" fill="#3b3f46"/><path d="M18.7 7.2 L21.0 6.5 L20.1 12.2 L17.7 12.9 Z" fill="#3b3f46"/><path d="M23.8 5.6 L26.2 4.9 L25.2 10.6 L22.9 11.4 Z" fill="#3b3f46"/><path d="M29.0 4.0 L31.4 3.3 L30.4 9.0 L28.0 9.8 Z" fill="#3b3f46"/><path d="M34.1 2.5 L36.5 1.7 L35.6 7.5 L33.2 8.2 Z" fill="#3b3f46"/><path d="M39.3 0.9 L40.5 0.5 L40.7 5.9 L38.3 6.6 Z" fill="#3b3f46"/>
<path d="M7.0 20.4 L44.5 14.2 L45.1 17.9 L7.6 24.1 Z" fill="#2c3037"/><path d="M11.4 19.7 L13.8 19.3 L12.2 23.4 L9.8 23.8 Z" fill="#f4f4f4"/><path d="M16.2 18.9 L18.5 18.5 L16.9 22.6 L14.5 23.0 Z" fill="#f4f4f4"/><path d="M20.9 18.1 L23.3 17.7 L21.6 21.8 L19.3 22.2 Z" fill="#f4f4f4"/><path d="M25.6 17.3 L28.0 16.9 L26.4 21.0 L24.0 21.4 Z" fill="#f4f4f4"/><path d="M30.4 16.5 L32.7 16.1 L31.1 20.3 L28.7 20.7 Z" fill="#f4f4f4"/><path d="M35.1 15.8 L37.5 15.4 L35.8 19.5 L33.5 19.9 Z" fill="#f4f4f4"/><path d="M39.8 15.0 L42.2 14.6 L40.6 18.7 L38.2 19.1 Z" fill="#f4f4f4"/><path d="M44.6 14.2 L44.5 14.2 L45.1 17.9 L42.9 18.3 Z" fill="#f4f4f4"/>
<path d="M1 14.800 L8 12.300 L11 20.800 L4.800 23 Z" fill="#2f3238"/>
<path d="M5 23 L45.300 17.800 L49.600 46 C49.800 47.200 49.300 48 48.200 48.300 L10.500 57 C9.300 57.300 8.400 56.800 8.200 55.600 Z" fill="url(#g50)"/>
<path d="M6.300 34.300 L47 27.800 M6.800 39 L47.700 32 M7.300 43.500 L48.300 36 M7.800 48 L48.900 40.300 M8.300 52.300 L49.400 44.300" stroke="#b5c8da" stroke-width="0.600" opacity="0.700"/>
<path d="M24.300 20.800 L25.800 31" stroke="#b5c8da" stroke-width="0.700" opacity="0.800"/>
<path d="M7.500 27 L14 26 M26.500 23 L31.500 22.200 M8.500 37 L13 36.200 M9 42 L22 39.700 M9.500 46.500 L16 45.300 M10 51 L13.500 50.300 M11.500 55 L22 52.700" stroke="#e8eff6" stroke-width="1.100" opacity="0.850"/>
<path d="M13.500 47.300 L27.500 44.600 L28 48.600 L14 51.400 Z" fill="#0d1f33" opacity="0.900"/>
<path d="M31 43.700 L36 42.800 M40.500 42 L45.500 41" stroke="#c9d8e6" stroke-width="0.800" opacity="0.700"/></svg></div>
<div class="t" style="left:392.5px;top:672px;line-height:15px">bfb9e00295b<br>c882d</div>
<div class="a" style="left:496.5px;top:602px"><svg width="50" height="60" viewBox="0 0 50 60" style="display:block"><defs><linearGradient id="g51" x1="0" x2="0.150" y1="0" y2="1"><stop offset="0" stop-color="#819dba"/><stop offset="0.320" stop-color="#6686a8"/><stop offset="0.380" stop-color="#34557a"/><stop offset="0.580" stop-color="#1f3b5a"/><stop offset="1" stop-color="#10233a"/></linearGradient></defs>
<path d="M-3 43 L5 31 L9 56 Z" fill="#e6e6e6" opacity="0.700"/>
<path d="M2.4 12.2 L40.5 0.5 L42.0 5.5 L3.9 17.2 Z" fill="#eeeeee"/><path d="M13.5 8.8 L15.9 8.1 L14.9 13.8 L12.5 14.5 Z" fill="#3b3f46"/><path d="M18.7 7.2 L21.0 6.5 L20.1 12.2 L17.7 12.9 Z" fill="#3b3f46"/><path d="M23.8 5.6 L26.2 4.9 L25.2 10.6 L22.9 11.4 Z" fill="#3b3f46"/><path d="M29.0 4.0 L31.4 3.3 L30.4 9.0 L28.0 9.8 Z" fill="#3b3f46"/><path d="M34.1 2.5 L36.5 1.7 L35.6 7.5 L33.2 8.2 Z" fill="#3b3f46"/><path d="M39.3 0.9 L40.5 0.5 L40.7 5.9 L38.3 6.6 Z" fill="#3b3f46"/>
<path d="M7.0 20.4 L44.5 14.2 L45.1 17.9 L7.6 24.1 Z" fill="#2c3037"/><path d="M11.4 19.7 L13.8 19.3 L12.2 23.4 L9.8 23.8 Z" fill="#f4f4f4"/><path d="M16.2 18.9 L18.5 18.5 L16.9 22.6 L14.5 23.0 Z" fill="#f4f4f4"/><path d="M20.9 18.1 L23.3 17.7 L21.6 21.8 L19.3 22.2 Z" fill="#f4f4f4"/><path d="M25.6 17.3 L28.0 16.9 L26.4 21.0 L24.0 21.4 Z" fill="#f4f4f4"/><path d="M30.4 16.5 L32.7 16.1 L31.1 20.3 L28.7 20.7 Z" fill="#f4f4f4"/><path d="M35.1 15.8 L37.5 15.4 L35.8 19.5 L33.5 19.9 Z" fill="#f4f4f4"/><path d="M39.8 15.0 L42.2 14.6 L40.6 18.7 L38.2 19.1 Z" fill="#f4f4f4"/><path d="M44.6 14.2 L44.5 14.2 L45.1 17.9 L42.9 18.3 Z" fill="#f4f4f4"/>
<path d="M1 14.800 L8 12.300 L11 20.800 L4.800 23 Z" fill="#2f3238"/>
<path d="M5 23 L45.300 17.800 L49.600 46 C49.800 47.200 49.300 48 48.200 48.300 L10.500 57 C9.300 57.300 8.400 56.800 8.200 55.600 Z" fill="url(#g51)"/>
<path d="M6.300 34.300 L47 27.800 M6.800 39 L47.700 32 M7.300 43.500 L48.300 36 M7.800 48 L48.900 40.300 M8.300 52.300 L49.400 44.300" stroke="#b5c8da" stroke-width="0.600" opacity="0.700"/>
<path d="M24.300 20.800 L25.800 31" stroke="#b5c8da" stroke-width="0.700" opacity="0.800"/>
<path d="M7.500 27 L14 26 M26.500 23 L31.500 22.200 M8.500 37 L13 36.200 M9 42 L22 39.700 M9.500 46.500 L16 45.300 M10 51 L13.500 50.300 M11.500 55 L22 52.700" stroke="#e8eff6" stroke-width="1.100" opacity="0.850"/>
<path d="M13.500 47.300 L27.500 44.600 L28 48.600 L14 51.400 Z" fill="#0d1f33" opacity="0.900"/>
<path d="M31 43.700 L36 42.800 M40.500 42 L45.500 41" stroke="#c9d8e6" stroke-width="0.800" opacity="0.700"/></svg></div>
<div class="t" style="left:483.5px;top:664px;line-height:15px">Deep sea on<br>14172249764<br>84</div>
<div class="a" style="left:588.5px;top:602px"><svg width="50" height="60" viewBox="0 0 50 60" style="display:block"><defs><linearGradient id="g52" x1="0" x2="0.150" y1="0" y2="1"><stop offset="0" stop-color="#819dba"/><stop offset="0.320" stop-color="#6686a8"/><stop offset="0.380" stop-color="#34557a"/><stop offset="0.580" stop-color="#1f3b5a"/><stop offset="1" stop-color="#10233a"/></linearGradient></defs>
<path d="M-3 43 L5 31 L9 56 Z" fill="#e6e6e6" opacity="0.700"/>
<path d="M2.4 12.2 L40.5 0.5 L42.0 5.5 L3.9 17.2 Z" fill="#eeeeee"/><path d="M13.5 8.8 L15.9 8.1 L14.9 13.8 L12.5 14.5 Z" fill="#3b3f46"/><path d="M18.7 7.2 L21.0 6.5 L20.1 12.2 L17.7 12.9 Z" fill="#3b3f46"/><path d="M23.8 5.6 L26.2 4.9 L25.2 10.6 L22.9 11.4 Z" fill="#3b3f46"/><path d="M29.0 4.0 L31.4 3.3 L30.4 9.0 L28.0 9.8 Z" fill="#3b3f46"/><path d="M34.1 2.5 L36.5 1.7 L35.6 7.5 L33.2 8.2 Z" fill="#3b3f46"/><path d="M39.3 0.9 L40.5 0.5 L40.7 5.9 L38.3 6.6 Z" fill="#3b3f46"/>
<path d="M7.0 20.4 L44.5 14.2 L45.1 17.9 L7.6 24.1 Z" fill="#2c3037"/><path d="M11.4 19.7 L13.8 19.3 L12.2 23.4 L9.8 23.8 Z" fill="#f4f4f4"/><path d="M16.2 18.9 L18.5 18.5 L16.9 22.6 L14.5 23.0 Z" fill="#f4f4f4"/><path d="M20.9 18.1 L23.3 17.7 L21.6 21.8 L19.3 22.2 Z" fill="#f4f4f4"/><path d="M25.6 17.3 L28.0 16.9 L26.4 21.0 L24.0 21.4 Z" fill="#f4f4f4"/><path d="M30.4 16.5 L32.7 16.1 L31.1 20.3 L28.7 20.7 Z" fill="#f4f4f4"/><path d="M35.1 15.8 L37.5 15.4 L35.8 19.5 L33.5 19.9 Z" fill="#f4f4f4"/><path d="M39.8 15.0 L42.2 14.6 L40.6 18.7 L38.2 19.1 Z" fill="#f4f4f4"/><path d="M44.6 14.2 L44.5 14.2 L45.1 17.9 L42.9 18.3 Z" fill="#f4f4f4"/>
<path d="M1 14.800 L8 12.300 L11 20.800 L4.800 23 Z" fill="#2f3238"/>
<path d="M5 23 L45.300 17.800 L49.600 46 C49.800 47.200 49.300 48 48.200 48.300 L10.500 57 C9.300 57.300 8.400 56.800 8.200 55.600 Z" fill="url(#g52)"/>
<path d="M6.300 34.300 L47 27.800 M6.800 39 L47.700 32 M7.300 43.500 L48.300 36 M7.800 48 L48.900 40.300 M8.300 52.300 L49.400 44.300" stroke="#b5c8da" stroke-width="0.600" opacity="0.700"/>
<path d="M24.300 20.800 L25.800 31" stroke="#b5c8da" stroke-width="0.700" opacity="0.800"/>
<path d="M7.500 27 L14 26 M26.500 23 L31.500 22.200 M8.500 37 L13 36.200 M9 42 L22 39.700 M9.500 46.500 L16 45.300 M10 51 L13.500 50.300 M11.500 55 L22 52.700" stroke="#e8eff6" stroke-width="1.100" opacity="0.850"/>
<path d="M13.500 47.300 L27.500 44.600 L28 48.600 L14 51.400 Z" fill="#0d1f33" opacity="0.900"/>
<path d="M31 43.700 L36 42.800 M40.500 42 L45.500 41" stroke="#c9d8e6" stroke-width="0.800" opacity="0.700"/></svg></div>
<div class="t" style="left:574px;top:664px;line-height:15px">tv time off on<br>14174025727<br>97</div>
<div class="a" style="left:678.5px;top:602px"><svg width="50" height="60" viewBox="0 0 50 60" style="display:block"><defs><linearGradient id="g53" x1="0" x2="0.150" y1="0" y2="1"><stop offset="0" stop-color="#819dba"/><stop offset="0.320" stop-color="#6686a8"/><stop offset="0.380" stop-color="#34557a"/><stop offset="0.580" stop-color="#1f3b5a"/><stop offset="1" stop-color="#10233a"/></linearGradient></defs>
<path d="M-3 43 L5 31 L9 56 Z" fill="#e6e6e6" opacity="0.700"/>
<path d="M2.4 12.2 L40.5 0.5 L42.0 5.5 L3.9 17.2 Z" fill="#eeeeee"/><path d="M13.5 8.8 L15.9 8.1 L14.9 13.8 L12.5 14.5 Z" fill="#3b3f46"/><path d="M18.7 7.2 L21.0 6.5 L20.1 12.2 L17.7 12.9 Z" fill="#3b3f46"/><path d="M23.8 5.6 L26.2 4.9 L25.2 10.6 L22.9 11.4 Z" fill="#3b3f46"/><path d="M29.0 4.0 L31.4 3.3 L30.4 9.0 L28.0 9.8 Z" fill="#3b3f46"/><path d="M34.1 2.5 L36.5 1.7 L35.6 7.5 L33.2 8.2 Z" fill="#3b3f46"/><path d="M39.3 0.9 L40.5 0.5 L40.7 5.9 L38.3 6.6 Z" fill="#3b3f46"/>
<path d="M7.0 20.4 L44.5 14.2 L45.1 17.9 L7.6 24.1 Z" fill="#2c3037"/><path d="M11.4 19.7 L13.8 19.3 L12.2 23.4 L9.8 23.8 Z" fill="#f4f4f4"/><path d="M16.2 18.9 L18.5 18.5 L16.9 22.6 L14.5 23.0 Z" fill="#f4f4f4"/><path d="M20.9 18.1 L23.3 17.7 L21.6 21.8 L19.3 22.2 Z" fill="#f4f4f4"/><path d="M25.6 17.3 L28.0 16.9 L26.4 21.0 L24.0 21.4 Z" fill="#f4f4f4"/><path d="M30.4 16.5 L32.7 16.1 L31.1 20.3 L28.7 20.7 Z" fill="#f4f4f4"/><path d="M35.1 15.8 L37.5 15.4 L35.8 19.5 L33.5 19.9 Z" fill="#f4f4f4"/><path d="M39.8 15.0 L42.2 14.6 L40.6 18.7 L38.2 19.1 Z" fill="#f4f4f4"/><path d="M44.6 14.2 L44.5 14.2 L45.1 17.9 L42.9 18.3 Z" fill="#f4f4f4"/>
<path d="M1 14.800 L8 12.300 L11 20.800 L4.800 23 Z" fill="#2f3238"/>
<path d="M5 23 L45.300 17.800 L49.600 46 C49.800 47.200 49.300 48 48.200 48.300 L10.500 57 C9.300 57.300 8.400 56.800 8.200 55.600 Z" fill="url(#g53)"/>
<path d="M6.300 34.300 L47 27.800 M6.800 39 L47.700 32 M7.300 43.500 L48.300 36 M7.800 48 L48.900 40.300 M8.300 52.300 L49.400 44.300" stroke="#b5c8da" stroke-width="0.600" opacity="0.700"/>
<path d="M24.300 20.800 L25.800 31" stroke="#b5c8da" stroke-width="0.700" opacity="0.800"/>
<path d="M7.500 27 L14 26 M26.500 23 L31.500 22.200 M8.500 37 L13 36.200 M9 42 L22 39.700 M9.500 46.500 L16 45.300 M10 51 L13.500 50.300 M11.500 55 L22 52.700" stroke="#e8eff6" stroke-width="1.100" opacity="0.850"/>
<path d="M13.500 47.300 L27.500 44.600 L28 48.600 L14 51.400 Z" fill="#0d1f33" opacity="0.900"/>
<path d="M31 43.700 L36 42.800 M40.500 42 L45.500 41" stroke="#c9d8e6" stroke-width="0.800" opacity="0.700"/></svg></div>
<div class="t" style="left:664.5px;top:664px;line-height:15px">Deep sea off<br>14174027519<br>91</div>
<div class="a" style="left:43px;top:721.5px"><svg width="50" height="60" viewBox="0 0 50 60" style="display:block"><defs><linearGradient id="g54" x1="0" x2="0.150" y1="0" y2="1"><stop offset="0" stop-color="#819dba"/><stop offset="0.320" stop-color="#6686a8"/><stop offset="0.380" stop-color="#34557a"/><stop offset="0.580" stop-color="#1f3b5a"/><stop offset="1" stop-color="#10233a"/></linearGradient></defs>
<path d="M-3 43 L5 31 L9 56 Z" fill="#e6e6e6" opacity="0.700"/>
<path d="M2.4 12.2 L40.5 0.5 L42.0 5.5 L3.9 17.2 Z" fill="#eeeeee"/><path d="M13.5 8.8 L15.9 8.1 L14.9 13.8 L12.5 14.5 Z" fill="#3b3f46"/><path d="M18.7 7.2 L21.0 6.5 L20.1 12.2 L17.7 12.9 Z" fill="#3b3f46"/><path d="M23.8 5.6 L26.2 4.9 L25.2 10.6 L22.9 11.4 Z" fill="#3b3f46"/><path d="M29.0 4.0 L31.4 3.3 L30.4 9.0 L28.0 9.8 Z" fill="#3b3f46"/><path d="M34.1 2.5 L36.5 1.7 L35.6 7.5 L33.2 8.2 Z" fill="#3b3f46"/><path d="M39.3 0.9 L40.5 0.5 L40.7 5.9 L38.3 6.6 Z" fill="#3b3f46"/>
<path d="M7.0 20.4 L44.5 14.2 L45.1 17.9 L7.6 24.1 Z" fill="#2c3037"/><path d="M11.4 19.7 L13.8 19.3 L12.2 23.4 L9.8 23.8 Z" fill="#f4f4f4"/><path d="M16.2 18.9 L18.5 18.5 L16.9 22.6 L14.5 23.0 Z" fill="#f4f4f4"/><path d="M20.9 18.1 L23.3 17.7 L21.6 21.8 L19.3 22.2 Z" fill="#f4f4f4"/><path d="M25.6 17.3 L28.0 16.9 L26.4 21.0 L24.0 21.4 Z" fill="#f4f4f4"/><path d="M30.4 16.5 L32.7 16.1 L31.1 20.3 L28.7 20.7 Z" fill="#f4f4f4"/><path d="M35.1 15.8 L37.5 15.4 L35.8 19.5 L33.5 19.9 Z" fill="#f4f4f4"/><path d="M39.8 15.0 L42.2 14.6 L40.6 18.7 L38.2 19.1 Z" fill="#f4f4f4"/><path d="M44.6 14.2 L44.5 14.2 L45.1 17.9 L42.9 18.3 Z" fill="#f4f4f4"/>
<path d="M1 14.800 L8 12.300 L11 20.800 L4.800 23 Z" fill="#2f3238"/>
<path d="M5 23 L45.300 17.800 L49.600 46 C49.800 47.200 49.300 48 48.200 48.300 L10.500 57 C9.300 57.300 8.400 56.800 8.200 55.600 Z" fill="url(#g54)"/>
<path d="M6.300 34.300 L47 27.800 M6.800 39 L47.700 32 M7.300 43.500 L48.300 36 M7.800 48 L48.900 40.300 M8.300 52.300 L49.400 44.300" stroke="#b5c8da" stroke-width="0.600" opacity="0.700"/>
<path d="M24.300 20.800 L25.800 31" stroke="#b5c8da" stroke-width="0.700" opacity="0.800"/>
<path d="M7.500 27 L14 26 M26.500 23 L31.500 22.200 M8.500 37 L13 36.200 M9 42 L22 39.700 M9.500 46.500 L16 45.300 M10 51 L13.500 50.300 M11.500 55 L22 52.700" stroke="#e8eff6" stroke-width="1.100" opacity="0.850"/>
<path d="M13.500 47.300 L27.500 44.600 L28 48.600 L14 51.400 Z" fill="#0d1f33" opacity="0.900"/>
<path d="M31 43.700 L36 42.800 M40.500 42 L45.500 41" stroke="#c9d8e6" stroke-width="0.800" opacity="0.700"/></svg></div>
<div class="a" style="left:130px;top:730px"><svg width="50" height="60" viewBox="0 0 50 60" style="display:block"><defs><linearGradient id="g55" x1="0" x2="0.150" y1="0" y2="1"><stop offset="0" stop-color="#819dba"/><stop offset="0.320" stop-color="#6686a8"/><stop offset="0.380" stop-color="#34557a"/><stop offset="0.580" stop-color="#1f3b5a"/><stop offset="1" stop-color="#10233a"/></linearGradient></defs>
<path d="M-3 43 L5 31 L9 56 Z" fill="#e6e6e6" opacity="0.700"/>
<path d="M2.4 12.2 L40.5 0.5 L42.0 5.5 L3.9 17.2 Z" fill="#eeeeee"/><path d="M13.5 8.8 L15.9 8.1 L14.9 13.8 L12.5 14.5 Z" fill="#3b3f46"/><path d="M18.7 7.2 L21.0 6.5 L20.1 12.2 L17.7 12.9 Z" fill="#3b3f46"/><path d="M23.8 5.6 L26.2 4.9 L25.2 10.6 L22.9 11.4 Z" fill="#3b3f46"/><path d="M29.0 4.0 L31.4 3.3 L30.4 9.0 L28.0 9.8 Z" fill="#3b3f46"/><path d="M34.1 2.5 L36.5 1.7 L35.6 7.5 L33.2 8.2 Z" fill="#3b3f46"/><path d="M39.3 0.9 L40.5 0.5 L40.7 5.9 L38.3 6.6 Z" fill="#3b3f46"/>
<path d="M7.0 20.4 L44.5 14.2 L45.1 17.9 L7.6 24.1 Z" fill="#2c3037"/><path d="M11.4 19.7 L13.8 19.3 L12.2 23.4 L9.8 23.8 Z" fill="#f4f4f4"/><path d="M16.2 18.9 L18.5 18.5 L16.9 22.6 L14.5 23.0 Z" fill="#f4f4f4"/><path d="M20.9 18.1 L23.3 17.7 L21.6 21.8 L19.3 22.2 Z" fill="#f4f4f4"/><path d="M25.6 17.3 L28.0 16.9 L26.4 21.0 L24.0 21.4 Z" fill="#f4f4f4"/><path d="M30.4 16.5 L32.7 16.1 L31.1 20.3 L28.7 20.7 Z" fill="#f4f4f4"/><path d="M35.1 15.8 L37.5 15.4 L35.8 19.5 L33.5 19.9 Z" fill="#f4f4f4"/><path d="M39.8 15.0 L42.2 14.6 L40.6 18.7 L38.2 19.1 Z" fill="#f4f4f4"/><path d="M44.6 14.2 L44.5 14.2 L45.1 17.9 L42.9 18.3 Z" fill="#f4f4f4"/>
<path d="M1 14.800 L8 12.300 L11 20.800 L4.800 23 Z" fill="#2f3238"/>
<path d="M5 23 L45.300 17.800 L49.600 46 C49.800 47.200 49.300 48 48.200 48.300 L10.500 57 C9.300 57.300 8.400 56.800 8.200 55.600 Z" fill="url(#g55)"/>
<path d="M6.300 34.300 L47 27.800 M6.800 39 L47.700 32 M7.300 43.500 L48.300 36 M7.800 48 L48.900 40.300 M8.300 52.300 L49.400 44.300" stroke="#b5c8da" stroke-width="0.600" opacity="0.700"/>
<path d="M24.300 20.800 L25.800 31" stroke="#b5c8da" stroke-width="0.700" opacity="0.800"/>
<path d="M7.500 27 L14 26 M26.500 23 L31.500 22.200 M8.500 37 L13 36.200 M9 42 L22 39.700 M9.500 46.500 L16 45.300 M10 51 L13.500 50.300 M11.500 55 L22 52.700" stroke="#e8eff6" stroke-width="1.100" opacity="0.850"/>
<path d="M13.500 47.300 L27.500 44.600 L28 48.600 L14 51.400 Z" fill="#0d1f33" opacity="0.900"/>
<path d="M31 43.700 L36 42.800 M40.500 42 L45.500 41" stroke="#c9d8e6" stroke-width="0.800" opacity="0.700"/></svg></div>
<div class="a" style="left:221px;top:730px"><svg width="50" height="60" viewBox="0 0 50 60" style="display:block"><defs><linearGradient id="g56" x1="0" x2="0.150" y1="0" y2="1"><stop offset="0" stop-color="#819dba"/><stop offset="0.320" stop-color="#6686a8"/><stop offset="0.380" stop-color="#34557a"/><stop offset="0.580" stop-color="#1f3b5a"/><stop offset="1" stop-color="#10233a"/></linearGradient></defs>
<path d="M-3 43 L5 31 L9 56 Z" fill="#e6e6e6" opacity="0.700"/>
<path d="M2.4 12.2 L40.5 0.5 L42.0 5.5 L3.9 17.2 Z" fill="#eeeeee"/><path d="M13.5 8.8 L15.9 8.1 L14.9 13.8 L12.5 14.5 Z" fill="#3b3f46"/><path d="M18.7 7.2 L21.0 6.5 L20.1 12.2 L17.7 12.9 Z" fill="#3b3f46"/><path d="M23.8 5.6 L26.2 4.9 L25.2 10.6 L22.9 11.4 Z" fill="#3b3f46"/><path d="M29.0 4.0 L31.4 3.3 L30.4 9.0 L28.0 9.8 Z" fill="#3b3f46"/><path d="M34.1 2.5 L36.5 1.7 L35.6 7.5 L33.2 8.2 Z" fill="#3b3f46"/><path d="M39.3 0.9 L40.5 0.5 L40.7 5.9 L38.3 6.6 Z" fill="#3b3f46"/>
<path d="M7.0 20.4 L44.5 14.2 L45.1 17.9 L7.6 24.1 Z" fill="#2c3037"/><path d="M11.4 19.7 L13.8 19.3 L12.2 23.4 L9.8 23.8 Z" fill="#f4f4f4"/><path d="M16.2 18.9 L18.5 18.5 L16.9 22.6 L14.5 23.0 Z" fill="#f4f4f4"/><path d="M20.9 18.1 L23.3 17.7 L21.6 21.8 L19.3 22.2 Z" fill="#f4f4f4"/><path d="M25.6 17.3 L28.0 16.9 L26.4 21.0 L24.0 21.4 Z" fill="#f4f4f4"/><path d="M30.4 16.5 L32.7 16.1 L31.1 20.3 L28.7 20.7 Z" fill="#f4f4f4"/><path d="M35.1 15.8 L37.5 15.4 L35.8 19.5 L33.5 19.9 Z" fill="#f4f4f4"/><path d="M39.8 15.0 L42.2 14.6 L40.6 18.7 L38.2 19.1 Z" fill="#f4f4f4"/><path d="M44.6 14.2 L44.5 14.2 L45.1 17.9 L42.9 18.3 Z" fill="#f4f4f4"/>
<path d="M1 14.800 L8 12.300 L11 20.800 L4.800 23 Z" fill="#2f3238"/>
<path d="M5 23 L45.300 17.800 L49.600 46 C49.800 47.200 49.300 48 48.200 48.300 L10.500 57 C9.300 57.300 8.400 56.800 8.200 55.600 Z" fill="url(#g56)"/>
<path d="M6.300 34.300 L47 27.800 M6.800 39 L47.700 32 M7.300 43.500 L48.300 36 M7.800 48 L48.900 40.300 M8.300 52.300 L49.400 44.300" stroke="#b5c8da" stroke-width="0.600" opacity="0.700"/>
<path d="M24.300 20.800 L25.800 31" stroke="#b5c8da" stroke-width="0.700" opacity="0.800"/>
<path d="M7.500 27 L14 26 M26.500 23 L31.500 22.200 M8.500 37 L13 36.200 M9 42 L22 39.700 M9.500 46.500 L16 45.300 M10 51 L13.500 50.300 M11.500 55 L22 52.700" stroke="#e8eff6" stroke-width="1.100" opacity="0.850"/>
<path d="M13.500 47.300 L27.500 44.600 L28 48.600 L14 51.400 Z" fill="#0d1f33" opacity="0.900"/>
<path d="M31 43.700 L36 42.800 M40.500 42 L45.500 41" stroke="#c9d8e6" stroke-width="0.800" opacity="0.700"/></svg></div>
<div class="a" style="left:314px;top:730px"><svg width="50" height="60" viewBox="0 0 50 60" style="display:block"><defs><linearGradient id="g57" x1="0" x2="0.150" y1="0" y2="1"><stop offset="0" stop-color="#819dba"/><stop offset="0.320" stop-color="#6686a8"/><stop offset="0.380" stop-color="#34557a"/><stop offset="0.580" stop-color="#1f3b5a"/><stop offset="1" stop-color="#10233a"/></linearGradient></defs>
<path d="M-3 43 L5 31 L9 56 Z" fill="#e6e6e6" opacity="0.700"/>
<path d="M2.4 12.2 L40.5 0.5 L42.0 5.5 L3.9 17.2 Z" fill="#eeeeee"/><path d="M13.5 8.8 L15.9 8.1 L14.9 13.8 L12.5 14.5 Z" fill="#3b3f46"/><path d="M18.7 7.2 L21.0 6.5 L20.1 12.2 L17.7 12.9 Z" fill="#3b3f46"/><path d="M23.8 5.6 L26.2 4.9 L25.2 10.6 L22.9 11.4 Z" fill="#3b3f46"/><path d="M29.0 4.0 L31.4 3.3 L30.4 9.0 L28.0 9.8 Z" fill="#3b3f46"/><path d="M34.1 2.5 L36.5 1.7 L35.6 7.5 L33.2 8.2 Z" fill="#3b3f46"/><path d="M39.3 0.9 L40.5 0.5 L40.7 5.9 L38.3 6.6 Z" fill="#3b3f46"/>
<path d="M7.0 20.4 L44.5 14.2 L45.1 17.9 L7.6 24.1 Z" fill="#2c3037"/><path d="M11.4 19.7 L13.8 19.3 L12.2 23.4 L9.8 23.8 Z" fill="#f4f4f4"/><path d="M16.2 18.9 L18.5 18.5 L16.9 22.6 L14.5 23.0 Z" fill="#f4f4f4"/><path d="M20.9 18.1 L23.3 17.7 L21.6 21.8 L19.3 22.2 Z" fill="#f4f4f4"/><path d="M25.6 17.3 L28.0 16.9 L26.4 21.0 L24.0 21.4 Z" fill="#f4f4f4"/><path d="M30.4 16.5 L32.7 16.1 L31.1 20.3 L28.7 20.7 Z" fill="#f4f4f4"/><path d="M35.1 15.8 L37.5 15.4 L35.8 19.5 L33.5 19.9 Z" fill="#f4f4f4"/><path d="M39.8 15.0 L42.2 14.6 L40.6 18.7 L38.2 19.1 Z" fill="#f4f4f4"/><path d="M44.6 14.2 L44.5 14.2 L45.1 17.9 L42.9 18.3 Z" fill="#f4f4f4"/>
<path d="M1 14.800 L8 12.300 L11 20.800 L4.800 23 Z" fill="#2f3238"/>
<path d="M5 23 L45.300 17.800 L49.600 46 C49.800 47.200 49.300 48 48.200 48.300 L10.500 57 C9.300 57.300 8.400 56.800 8.200 55.600 Z" fill="url(#g57)"/>
<path d="M6.300 34.300 L47 27.800 M6.800 39 L47.700 32 M7.300 43.500 L48.300 36 M7.800 48 L48.900 40.300 M8.300 52.300 L49.400 44.300" stroke="#b5c8da" stroke-width="0.600" opacity="0.700"/>
<path d="M24.300 20.800 L25.800 31" stroke="#b5c8da" stroke-width="0.700" opacity="0.800"/>
<path d="M7.500 27 L14 26 M26.500 23 L31.500 22.200 M8.500 37 L13 36.200 M9 42 L22 39.700 M9.500 46.500 L16 45.300 M10 51 L13.500 50.300 M11.500 55 L22 52.700" stroke="#e8eff6" stroke-width="1.100" opacity="0.850"/>
<path d="M13.500 47.300 L27.500 44.600 L28 48.600 L14 51.400 Z" fill="#0d1f33" opacity="0.900"/>
<path d="M31 43.700 L36 42.800 M40.500 42 L45.500 41" stroke="#c9d8e6" stroke-width="0.800" opacity="0.700"/></svg></div>
<div class="a" style="left:406px;top:730px"><svg width="50" height="60" viewBox="0 0 50 60" style="display:block"><defs><linearGradient id="g58" x1="0" x2="0.150" y1="0" y2="1"><stop offset="0" stop-color="#819dba"/><stop offset="0.320" stop-color="#6686a8"/><stop offset="0.380" stop-color="#34557a"/><stop offset="0.580" stop-color="#1f3b5a"/><stop offset="1" stop-color="#10233a"/></linearGradient></defs>
<path d="M-3 43 L5 31 L9 56 Z" fill="#e6e6e6" opacity="0.700"/>
<path d="M2.4 12.2 L40.5 0.5 L42.0 5.5 L3.9 17.2 Z" fill="#eeeeee"/><path d="M13.5 8.8 L15.9 8.1 L14.9 13.8 L12.5 14.5 Z" fill="#3b3f46"/><path d="M18.7 7.2 L21.0 6.5 L20.1 12.2 L17.7 12.9 Z" fill="#3b3f46"/><path d="M23.8 5.6 L26.2 4.9 L25.2 10.6 L22.9 11.4 Z" fill="#3b3f46"/><path d="M29.0 4.0 L31.4 3.3 L30.4 9.0 L28.0 9.8 Z" fill="#3b3f46"/><path d="M34.1 2.5 L36.5 1.7 L35.6 7.5 L33.2 8.2 Z" fill="#3b3f46"/><path d="M39.3 0.9 L40.5 0.5 L40.7 5.9 L38.3 6.6 Z" fill="#3b3f46"/>
<path d="M7.0 20.4 L44.5 14.2 L45.1 17.9 L7.6 24.1 Z" fill="#2c3037"/><path d="M11.4 19.7 L13.8 19.3 L12.2 23.4 L9.8 23.8 Z" fill="#f4f4f4"/><path d="M16.2 18.9 L18.5 18.5 L16.9 22.6 L14.5 23.0 Z" fill="#f4f4f4"/><path d="M20.9 18.1 L23.3 17.7 L21.6 21.8 L19.3 22.2 Z" fill="#f4f4f4"/><path d="M25.6 17.3 L28.0 16.9 L26.4 21.0 L24.0 21.4 Z" fill="#f4f4f4"/><path d="M30.4 16.5 L32.7 16.1 L31.1 20.3 L28.7 20.7 Z" fill="#f4f4f4"/><path d="M35.1 15.8 L37.5 15.4 L35.8 19.5 L33.5 19.9 Z" fill="#f4f4f4"/><path d="M39.8 15.0 L42.2 14.6 L40.6 18.7 L38.2 19.1 Z" fill="#f4f4f4"/><path d="M44.6 14.2 L44.5 14.2 L45.1 17.9 L42.9 18.3 Z" fill="#f4f4f4"/>
<path d="M1 14.800 L8 12.300 L11 20.800 L4.800 23 Z" fill="#2f3238"/>
<path d="M5 23 L45.300 17.800 L49.600 46 C49.800 47.200 49.300 48 48.200 48.300 L10.500 57 C9.300 57.300 8.400 56.800 8.200 55.600 Z" fill="url(#g58)"/>
<path d="M6.300 34.300 L47 27.800 M6.800 39 L47.700 32 M7.300 43.500 L48.300 36 M7.800 48 L48.900 40.300 M8.300 52.300 L49.400 44.300" stroke="#b5c8da" stroke-width="0.600" opacity="0.700"/>
<path d="M24.300 20.800 L25.800 31" stroke="#b5c8da" stroke-width="0.700" opacity="0.800"/>
<path d="M7.500 27 L14 26 M26.500 23 L31.500 22.200 M8.500 37 L13 36.200 M9 42 L22 39.700 M9.500 46.500 L16 45.300 M10 51 L13.500 50.300 M11.500 55 L22 52.700" stroke="#e8eff6" stroke-width="1.100" opacity="0.850"/>
<path d="M13.500 47.300 L27.500 44.600 L28 48.600 L14 51.400 Z" fill="#0d1f33" opacity="0.900"/>
<path d="M31 43.700 L36 42.800 M40.500 42 L45.500 41" stroke="#c9d8e6" stroke-width="0.800" opacity="0.700"/></svg></div>
<div class="a" style="left:493.5px;top:730px"><svg width="50" height="60" viewBox="0 0 50 60" style="display:block"><defs><linearGradient id="g59" x1="0" x2="0.150" y1="0" y2="1"><stop offset="0" stop-color="#819dba"/><stop offset="0.320" stop-color="#6686a8"/><stop offset="0.380" stop-color="#34557a"/><stop offset="0.580" stop-color="#1f3b5a"/><stop offset="1" stop-color="#10233a"/></linearGradient></defs>
<path d="M-3 43 L5 31 L9 56 Z" fill="#e6e6e6" opacity="0.700"/>
<path d="M2.4 12.2 L40.5 0.5 L42.0 5.5 L3.9 17.2 Z" fill="#eeeeee"/><path d="M13.5 8.8 L15.9 8.1 L14.9 13.8 L12.5 14.5 Z" fill="#3b3f46"/><path d="M18.7 7.2 L21.0 6.5 L20.1 12.2 L17.7 12.9 Z" fill="#3b3f46"/><path d="M23.8 5.6 L26.2 4.9 L25.2 10.6 L22.9 11.4 Z" fill="#3b3f46"/><path d="M29.0 4.0 L31.4 3.3 L30.4 9.0 L28.0 9.8 Z" fill="#3b3f46"/><path d="M34.1 2.5 L36.5 1.7 L35.6 7.5 L33.2 8.2 Z" fill="#3b3f46"/><path d="M39.3 0.9 L40.5 0.5 L40.7 5.9 L38.3 6.6 Z" fill="#3b3f46"/>
<path d="M7.0 20.4 L44.5 14.2 L45.1 17.9 L7.6 24.1 Z" fill="#2c3037"/><path d="M11.4 19.7 L13.8 19.3 L12.2 23.4 L9.8 23.8 Z" fill="#f4f4f4"/><path d="M16.2 18.9 L18.5 18.5 L16.9 22.6 L14.5 23.0 Z" fill="#f4f4f4"/><path d="M20.9 18.1 L23.3 17.7 L21.6 21.8 L19.3 22.2 Z" fill="#f4f4f4"/><path d="M25.6 17.3 L28.0 16.9 L26.4 21.0 L24.0 21.4 Z" fill="#f4f4f4"/><path d="M30.4 16.5 L32.7 16.1 L31.1 20.3 L28.7 20.7 Z" fill="#f4f4f4"/><path d="M35.1 15.8 L37.5 15.4 L35.8 19.5 L33.5 19.9 Z" fill="#f4f4f4"/><path d="M39.8 15.0 L42.2 14.6 L40.6 18.7 L38.2 19.1 Z" fill="#f4f4f4"/><path d="M44.6 14.2 L44.5 14.2 L45.1 17.9 L42.9 18.3 Z" fill="#f4f4f4"/>
<path d="M1 14.800 L8 12.300 L11 20.800 L4.800 23 Z" fill="#2f3238"/>
<path d="M5 23 L45.300 17.800 L49.600 46 C49.800 47.200 49.300 48 48.200 48.300 L10.500 57 C9.300 57.300 8.400 56.800 8.200 55.600 Z" fill="url(#g59)"/>
<path d="M6.300 34.300 L47 27.800 M6.800 39 L47.700 32 M7.300 43.500 L48.300 36 M7.800 48 L48.900 40.300 M8.300 52.300 L49.400 44.300" stroke="#b5c8da" stroke-width="0.600" opacity="0.700"/>
<path d="M24.300 20.800 L25.800 31" stroke="#b5c8da" stroke-width="0.700" opacity="0.800"/>
<path d="M7.500 27 L14 26 M26.500 23 L31.500 22.200 M8.500 37 L13 36.200 M9 42 L22 39.700 M9.500 46.500 L16 45.300 M10 51 L13.500 50.300 M11.500 55 L22 52.700" stroke="#e8eff6" stroke-width="1.100" opacity="0.850"/>
<path d="M13.500 47.300 L27.500 44.600 L28 48.600 L14 51.400 Z" fill="#0d1f33" opacity="0.900"/>
<path d="M31 43.700 L36 42.800 M40.500 42 L45.500 41" stroke="#c9d8e6" stroke-width="0.800" opacity="0.700"/></svg></div>
<div class="a" style="left:588px;top:722.5px"><svg width="50" height="60" viewBox="0 0 50 60" style="display:block"><defs><linearGradient id="g60" x1="0" x2="0.150" y1="0" y2="1"><stop offset="0" stop-color="#819dba"/><stop offset="0.320" stop-color="#6686a8"/><stop offset="0.380" stop-color="#34557a"/><stop offset="0.580" stop-color="#1f3b5a"/><stop offset="1" stop-color="#10233a"/></linearGradient></defs>
<path d="M-3 43 L5 31 L9 56 Z" fill="#e6e6e6" opacity="0.700"/>
<path d="M2.4 12.2 L40.5 0.5 L42.0 5.5 L3.9 17.2 Z" fill="#eeeeee"/><path d="M13.5 8.8 L15.9 8.1 L14.9 13.8 L12.5 14.5 Z" fill="#3b3f46"/><path d="M18.7 7.2 L21.0 6.5 L20.1 12.2 L17.7 12.9 Z" fill="#3b3f46"/><path d="M23.8 5.6 L26.2 4.9 L25.2 10.6 L22.9 11.4 Z" fill="#3b3f46"/><path d="M29.0 4.0 L31.4 3.3 L30.4 9.0 L28.0 9.8 Z" fill="#3b3f46"/><path d="M34.1 2.5 L36.5 1.7 L35.6 7.5 L33.2 8.2 Z" fill="#3b3f46"/><path d="M39.3 0.9 L40.5 0.5 L40.7 5.9 L38.3 6.6 Z" fill="#3b3f46"/>
<path d="M7.0 20.4 L44.5 14.2 L45.1 17.9 L7.6 24.1 Z" fill="#2c3037"/><path d="M11.4 19.7 L13.8 19.3 L12.2 23.4 L9.8 23.8 Z" fill="#f4f4f4"/><path d="M16.2 18.9 L18.5 18.5 L16.9 22.6 L14.5 23.0 Z" fill="#f4f4f4"/><path d="M20.9 18.1 L23.3 17.7 L21.6 21.8 L19.3 22.2 Z" fill="#f4f4f4"/><path d="M25.6 17.3 L28.0 16.9 L26.4 21.0 L24.0 21.4 Z" fill="#f4f4f4"/><path d="M30.4 16.5 L32.7 16.1 L31.1 20.3 L28.7 20.7 Z" fill="#f4f4f4"/><path d="M35.1 15.8 L37.5 15.4 L35.8 19.5 L33.5 19.9 Z" fill="#f4f4f4"/><path d="M39.8 15.0 L42.2 14.6 L40.6 18.7 L38.2 19.1 Z" fill="#f4f4f4"/><path d="M44.6 14.2 L44.5 14.2 L45.1 17.9 L42.9 18.3 Z" fill="#f4f4f4"/>
<path d="M1 14.800 L8 12.300 L11 20.800 L4.800 23 Z" fill="#2f3238"/>
<path d="M5 23 L45.300 17.800 L49.600 46 C49.800 47.200 49.300 48 48.200 48.300 L10.500 57 C9.300 57.300 8.400 56.800 8.200 55.600 Z" fill="url(#g60)"/>
<path d="M6.300 34.300 L47 27.800 M6.800 39 L47.700 32 M7.300 43.500 L48.300 36 M7.800 48 L48.900 40.300 M8.300 52.300 L49.400 44.300" stroke="#b5c8da" stroke-width="0.600" opacity="0.700"/>
<path d="M24.300 20.800 L25.800 31" stroke="#b5c8da" stroke-width="0.700" opacity="0.800"/>
<path d="M7.500 27 L14 26 M26.500 23 L31.500 22.200 M8.500 37 L13 36.200 M9 42 L22 39.700 M9.500 46.500 L16 45.300 M10 51 L13.500 50.300 M11.500 55 L22 52.700" stroke="#e8eff6" stroke-width="1.100" opacity="0.850"/>
<path d="M13.500 47.300 L27.500 44.600 L28 48.600 L14 51.400 Z" fill="#0d1f33" opacity="0.900"/>
<path d="M31 43.700 L36 42.800 M40.500 42 L45.500 41" stroke="#c9d8e6" stroke-width="0.800" opacity="0.700"/></svg></div>
<div class="a" style="left:675px;top:736.5px"><svg width="50" height="60" viewBox="0 0 50 60" style="display:block"><defs><linearGradient id="g61" x1="0" x2="0.150" y1="0" y2="1"><stop offset="0" stop-color="#819dba"/><stop offset="0.320" stop-color="#6686a8"/><stop offset="0.380" stop-color="#34557a"/><stop offset="0.580" stop-color="#1f3b5a"/><stop offset="1" stop-color="#10233a"/></linearGradient></defs>
<path d="M-3 43 L5 31 L9 56 Z" fill="#e6e6e6" opacity="0.700"/>
<path d="M2.4 12.2 L40.5 0.5 L42.0 5.5 L3.9 17.2 Z" fill="#eeeeee"/><path d="M13.5 8.8 L15.9 8.1 L14.9 13.8 L12.5 14.5 Z" fill="#3b3f46"/><path d="M18.7 7.2 L21.0 6.5 L20.1 12.2 L17.7 12.9 Z" fill="#3b3f46"/><path d="M23.8 5.6 L26.2 4.9 L25.2 10.6 L22.9 11.4 Z" fill="#3b3f46"/><path d="M29.0 4.0 L31.4 3.3 L30.4 9.0 L28.0 9.8 Z" fill="#3b3f46"/><path d="M34.1 2.5 L36.5 1.7 L35.6 7.5 L33.2 8.2 Z" fill="#3b3f46"/><path d="M39.3 0.9 L40.5 0.5 L40.7 5.9 L38.3 6.6 Z" fill="#3b3f46"/>
<path d="M7.0 20.4 L44.5 14.2 L45.1 17.9 L7.6 24.1 Z" fill="#2c3037"/><path d="M11.4 19.7 L13.8 19.3 L12.2 23.4 L9.8 23.8 Z" fill="#f4f4f4"/><path d="M16.2 18.9 L18.5 18.5 L16.9 22.6 L14.5 23.0 Z" fill="#f4f4f4"/><path d="M20.9 18.1 L23.3 17.7 L21.6 21.8 L19.3 22.2 Z" fill="#f4f4f4"/><path d="M25.6 17.3 L28.0 16.9 L26.4 21.0 L24.0 21.4 Z" fill="#f4f4f4"/><path d="M30.4 16.5 L32.7 16.1 L31.1 20.3 L28.7 20.7 Z" fill="#f4f4f4"/><path d="M35.1 15.8 L37.5 15.4 L35.8 19.5 L33.5 19.9 Z" fill="#f4f4f4"/><path d="M39.8 15.0 L42.2 14.6 L40.6 18.7 L38.2 19.1 Z" fill="#f4f4f4"/><path d="M44.6 14.2 L44.5 14.2 L45.1 17.9 L42.9 18.3 Z" fill="#f4f4f4"/>
<path d="M1 14.800 L8 12.300 L11 20.800 L4.800 23 Z" fill="#2f3238"/>
<path d="M5 23 L45.300 17.800 L49.600 46 C49.800 47.200 49.300 48 48.200 48.300 L10.500 57 C9.300 57.300 8.400 56.800 8.200 55.600 Z" fill="url(#g61)"/>
<path d="M6.300 34.300 L47 27.800 M6.800 39 L47.700 32 M7.300 43.500 L48.300 36 M7.800 48 L48.900 40.300 M8.300 52.300 L49.400 44.300" stroke="#b5c8da" stroke-width="0.600" opacity="0.700"/>
<path d="M24.300 20.800 L25.800 31" stroke="#b5c8da" stroke-width="0.700" opacity="0.800"/>
<path d="M7.500 27 L14 26 M26.500 23 L31.500 22.200 M8.500 37 L13 36.200 M9 42 L22 39.700 M9.500 46.500 L16 45.300 M10 51 L13.500 50.300 M11.500 55 L22 52.700" stroke="#e8eff6" stroke-width="1.100" opacity="0.850"/>
<path d="M13.500 47.300 L27.500 44.600 L28 48.600 L14 51.400 Z" fill="#0d1f33" opacity="0.900"/>
<path d="M31 43.700 L36 42.800 M40.500 42 L45.500 41" stroke="#c9d8e6" stroke-width="0.800" opacity="0.700"/></svg></div>
</div>
<div class="a" style="left:792px;top:190px;width:17px;height:580px;background:#f0f0f0"></div>
<div class="a" style="left:792px;top:206px;width:17px;height:313px;background:#cdcdcd"></div>
<svg class="a" style="left:792px;top:190px" width="17" height="17"><path d="M4.500 10 L8 6.500 L11.500 10" stroke="#7a7a7a" stroke-width="1.200" fill="none"/></svg>
<svg class="a" style="left:792px;top:754px" width="17" height="17"><path d="M4.500 6.500 L8 10 L11.500 6.500" stroke="#8a8a8a" stroke-width="1.200" fill="none"/></svg>
<div class="t c" style="left:815.0px;top:170px;width:330px;">Hue / Color</div>
<div class="bar" style="top:188px;background:linear-gradient(90deg,#ff0000 0%,#ffff00 16.600%,#00ff00 33.300%,#00ffff 50%,#0000ff 66.600%,#ff00ff 83.300%,#ff0000 100%)"><div class="track"></div></div>
<div class="thumb" style="left:892px;top:188px;width:11px;height:17px;"></div>
<div class="t c" style="left:815.0px;top:224px;width:330px;">Brightness</div>
<div class="bar" style="top:243px;background:linear-gradient(105deg,#000,#fff)"><div class="track"></div></div>
<div class="thumb" style="left:1127px;top:243px;width:11px;height:17px;"></div>
<div class="t c" style="left:815.0px;top:279px;width:330px;">Color Temperature</div>
<div class="bar" style="top:297px;background:linear-gradient(105deg,#fffdfb,#f5851f)"><div class="track"></div></div>
<div class="thumb" style="left:1012px;top:297px;width:11px;height:17px;"></div>
<div class="t c" style="left:815.0px;top:334px;width:330px;">Saturation</div>
<div class="bar" style="top:352px;background:linear-gradient(105deg,#ffffff,#9cf00c)"><div class="track"></div></div>
<div class="thumb" style="left:995px;top:352px;width:11px;height:17px;"></div>
<div class="t c" style="left:815.0px;top:393px;width:330px;">X Color Space</div>
<div class="a" style="left:827px;top:417px;width:268px;height:4px;background:#e6e9ea;border:1px solid #d4d7d9"></div>
<div class="thumb" style="left:945px;top:410px;width:10px;height:17px;"></div>
<div class="t c" style="left:815.0px;top:437px;width:330px;">Y Color Space</div>
<div class="a" style="left:827px;top:454px;width:268px;height:4px;background:#e6e9ea;border:1px solid #d4d7d9"></div>
<div class="thumb" style="left:932px;top:447px;width:10px;height:17px;"></div>
<div class="a" style="left:1104px;top:416px;width:34px;height:41px;background:#fcb46c;border:1px solid #222"></div>
<div class="a" style="left:813px;top:474px;width:334px;height:256px;background:#fff;border-top:1px solid #aeb6be"></div>
<div class="a" style="left:0;top:0;width:1155px;height:730px;overflow:hidden">
<div class="pr" style="top:475px;height:20px"><div class="k" style=""><span>manufacturername</span></div><div class="v"><span>Philips</span></div></div>
<div class="pr" style="top:495px;height:20.3px"><div class="k" style=""><span>modelid</span></div><div class="v"><span>LCT001</span></div></div>
<div class="pr" style="top:515.3px;height:20.3px"><div class="k" style=""><span>name</span></div><div class="v"><span>Basement 2</span></div></div>
<div class="pr" style="top:535.5999999999999px;height:20px"><div class="k" style=""><svg width="8" height="9" style="position:absolute;left:7px;top:5px"><path d="M1 0.500 L5 4 L1 7.500 Z" fill="#222"/></svg><span>pointsymbol</span></div><div class="v"><span>Click to expand this property</span></div></div>
<div class="pr" style="top:555.5999999999999px;height:20px"><div class="k" style="background:#cce8f7;"><svg width="14" height="14" style="position:absolute;left:2px;top:2px"><rect x="0.500" y="0.500" width="13" height="13" fill="none" stroke="#333" stroke-dasharray="1 1"/><path d="M9.500 4 L9.500 9.500 L4 9.500 Z" fill="#222"/></svg><span>state</span></div><div class="v"><span>(Expand to see state)</span></div></div>
<div class="pr sub" style="top:575.5999999999999px;height:21px"><div class="k" style=""><span>alert</span></div><div class="v cb"><span>none</span><svg width="9" height="6" style="position:absolute;right:5px;top:7px"><path d="M1 1 L4.500 4.500 L8 1" stroke="#aaa" fill="none"/></svg></div></div>
<div class="pr sub" style="top:596.5999999999999px;height:20.3px"><div class="k" style=""><span>bri</span></div><div class="v"><span>254</span></div></div>
<div class="pr sub" style="top:616.8999999999999px;height:20.3px"><div class="k" style=""><span>bri_inc</span></div><div class="v"><span></span></div></div>
<div class="pr sub" style="top:637.1999999999998px;height:20px"><div class="k" style=""><span>colormode</span></div><div class="v"><span>ct</span></div></div>
<div class="pr sub" style="top:657.1999999999998px;height:20.3px"><div class="k" style=""><span>ct</span></div><div class="v"><span>369</span></div></div>
<div class="pr sub" style="top:677.4999999999998px;height:20.4px"><div class="k" style=""><span>ct_inc</span></div><div class="v"><span></span></div></div>
<div class="pr sub" style="top:697.8999999999997px;height:21px"><div class="k" style=""><span>effect</span></div><div class="v cb"><span>none</span><svg width="9" height="6" style="position:absolute;right:5px;top:7px"><path d="M1 1 L4.500 4.500 L8 1" stroke="#aaa" fill="none"/></svg></div></div>
<div class="pr sub" style="top:718.8999999999997px;height:20px"><div class="k" style=""><span>hue</span></div><div class="v"><span>14910</span></div></div>
</div>
<div class="a" style="left:1130px;top:475px;width:17px;height:255px;background:#f0f0f0"></div>
<div class="a" style="left:1130px;top:492px;width:17px;height:121px;background:#cdcdcd"></div>
<svg class="a" style="left:1130px;top:475px" width="17" height="17"><path d="M4.500 10.500 L8.500 6.500 L12.500 10.500" stroke="#7a7a7a" stroke-width="1.200" fill="none"/></svg>
<svg class="a" style="left:1130px;top:713px" width="17" height="17"><path d="M4.500 6.500 L8.500 10.500 L12.500 6.500" stroke="#7a7a7a" stroke-width="1.200" fill="none"/></svg>
<div class="a" style="left:813px;top:730px;width:334px;height:45px;background:#dfdfdf;border-top:3px solid #ececec"></div>
<div class="t" style="left:816px;top:738px;font-weight:bold;letter-spacing:-0.2px">state</div>
<div class="t" style="left:819px;top:755px;">State</div>
<div class="a" style="left:9px;top:773px;width:1138px;height:27px;background:#f1efef;border-top:1.500px solid #b9bcc0"></div>
<div class="t" style="left:16px;top:783px;">No new message.</div>
<div class="a" style="left:0;top:0;width:1147px;height:808px;overflow:hidden"><div class="a" id="wm" style="left:836px;top:755px;font-size:35.500px;font-weight:bold;line-height:44px;white-space:nowrap"><span id="wm1" style="color:#82c350;-webkit-text-stroke:0.700px #82c350;opacity:0.650;letter-spacing:0.600px">lime</span><span id="wm2" style="color:#646464;-webkit-text-stroke:0.700px #646464;opacity:0.530;letter-spacing:-0.800px;margin-left:0.500px">download.com</span></div></div>
</body></html>
